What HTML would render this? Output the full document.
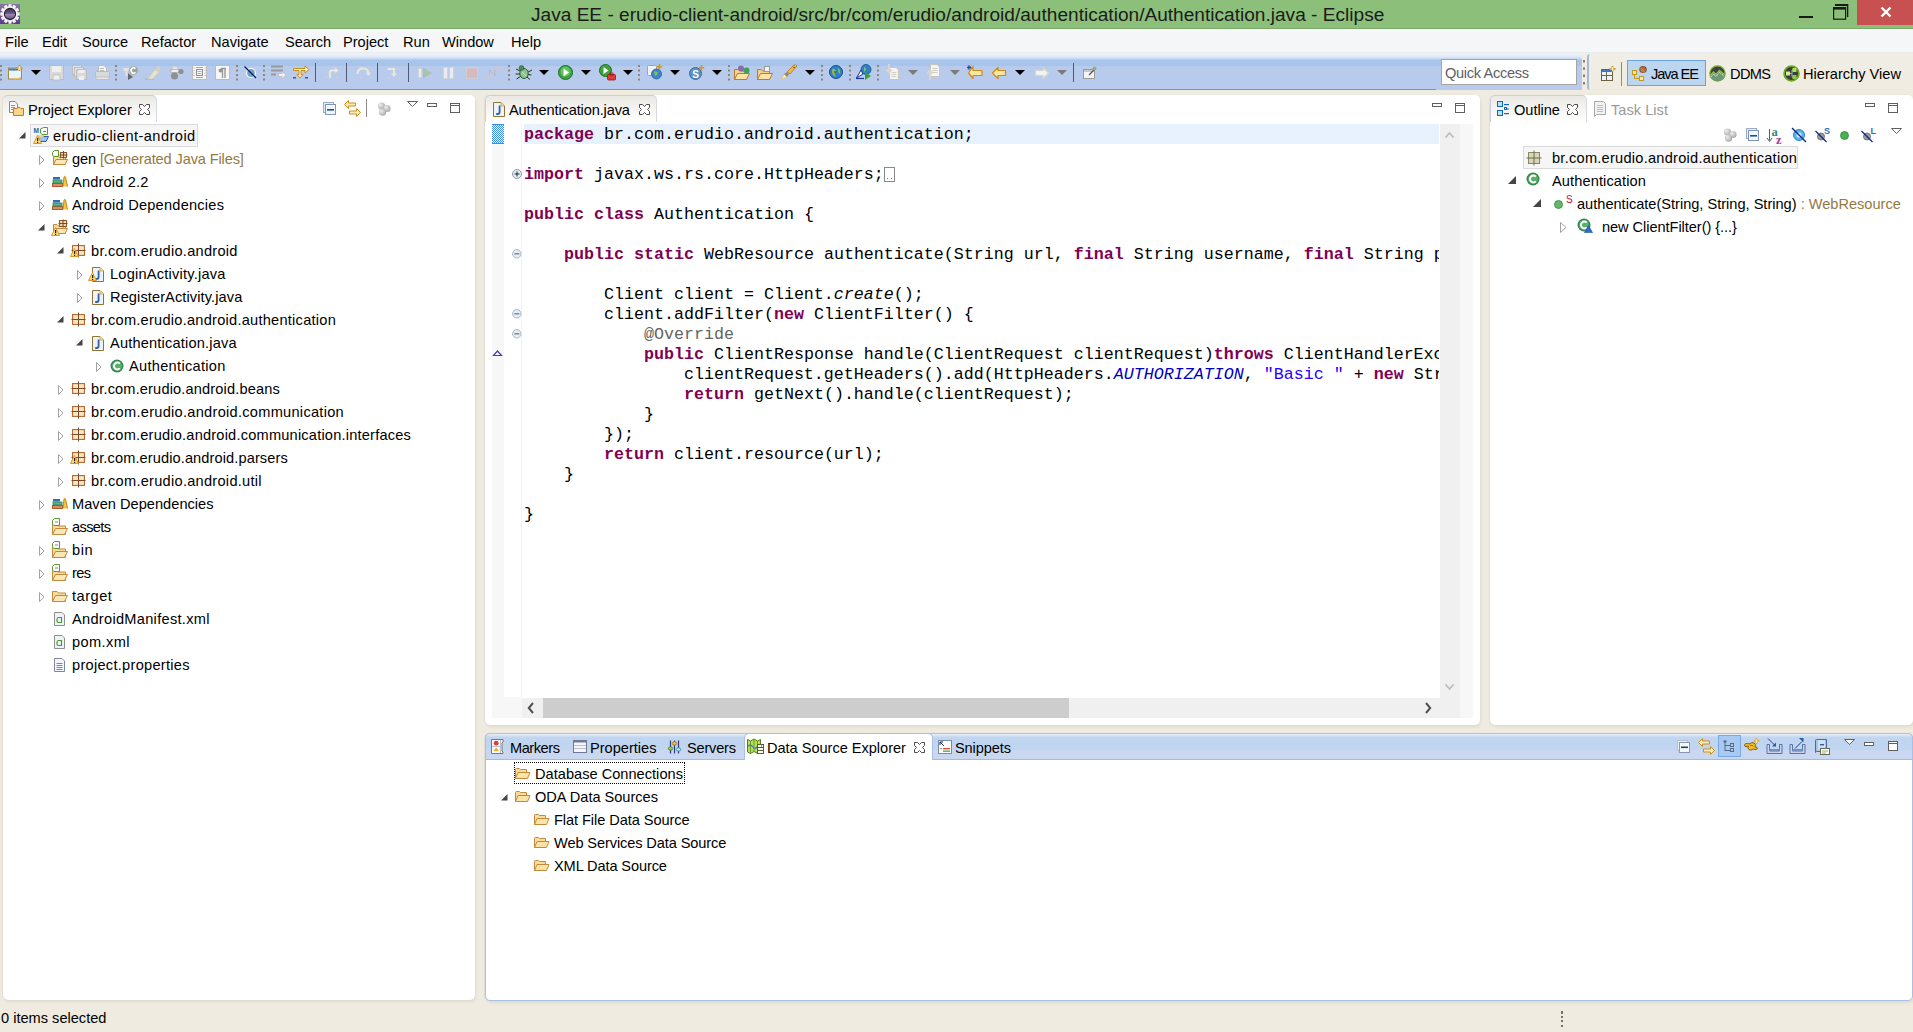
<!DOCTYPE html>
<html><head><meta charset="utf-8"><title>Eclipse</title>
<style>
html,body{margin:0;padding:0;}
body{width:1913px;height:1032px;position:relative;overflow:hidden;background:#efebe0;font-family:'Liberation Sans', sans-serif;}
.t{position:absolute;white-space:pre;line-height:20px;}
svg{overflow:visible;}
.code{position:absolute;left:0;white-space:pre;font-family:"Liberation Mono",monospace;font-size:16.667px;line-height:20px;color:#000;}
.code b{font-weight:bold;}
</style></head><body>
<div style="position:absolute;left:0px;top:0px;width:1913px;height:28px;background:#8bbf7a;"></div><div style="position:absolute;left:0px;top:28px;width:1913px;height:1px;background:#7aa96b;"></div><svg style="position:absolute;left:0px;top:4px;" width="20" height="20" viewBox="0 0 20 20"><defs><linearGradient id="lgp" x1="0" y1="0" x2="0" y2="1"><stop offset="0" stop-color="#8a76a6"/><stop offset="1" stop-color="#5f3891"/></linearGradient><linearGradient id="lgc" x1="0" y1="0" x2="0" y2="1"><stop offset="0" stop-color="#3a3050"/><stop offset="0.45" stop-color="#6a5a88"/><stop offset="0.55" stop-color="#9a8ab0"/><stop offset="1" stop-color="#5a4580"/></linearGradient></defs><rect x="0" y="0" width="20" height="20" fill="url(#lgp)"/><path d="M8.52 0.21 L11.48 0.21 L11.66 2.58 L12.27 2.75 L13.61 0.78 L16.18 2.26 L15.14 4.41 L15.59 4.86 L17.74 3.82 L19.22 6.39 L17.25 7.73 L17.42 8.34 L19.79 8.52 L19.79 11.48 L17.42 11.66 L17.25 12.27 L19.22 13.61 L17.74 16.18 L15.59 15.14 L15.14 15.59 L16.18 17.74 L13.61 19.22 L12.27 17.25 L11.66 17.42 L11.48 19.79 L8.52 19.79 L8.34 17.42 L7.73 17.25 L6.39 19.22 L3.82 17.74 L4.86 15.59 L4.41 15.14 L2.26 16.18 L0.78 13.61 L2.75 12.27 L2.58 11.66 L0.21 11.48 L0.21 8.52 L2.58 8.34 L2.75 7.73 L0.78 6.39 L2.26 3.82 L4.41 4.86 L4.86 4.41 L3.82 2.26 L6.39 0.78 L7.73 2.75 L8.34 2.58 Z" fill="#f2f2f2"/><circle cx="10" cy="10" r="5.6" fill="url(#lgc)" stroke="#241c30" stroke-width="1.1"/></svg><div class="t" style="left:531px;top:5.38px;font-size:19.1px;color:#1b1b1b;font-family:'Liberation Sans', sans-serif;">Java EE - erudio-client-android/src/br/com/erudio/android/authentication/Authentication.java - Eclipse</div><div style="position:absolute;left:1799px;top:16px;width:14px;height:2px;background:#1a1a1a;"></div><svg style="position:absolute;left:1833px;top:4px;" width="16" height="16" viewBox="0 0 16 16"><rect x="2" y="0" width="13" height="2" fill="#1a1a1a"/><rect x="14" y="0" width="1.3" height="13" fill="#1a1a1a"/><rect x="0.6" y="3.6" width="12" height="11.6" fill="none" stroke="#1a1a1a" stroke-width="1.2"/><rect x="0" y="3" width="13" height="2.6" fill="#1a1a1a"/></svg><div style="position:absolute;left:1857px;top:0px;width:56px;height:25px;background:#c75050;"></div><svg style="position:absolute;left:1880px;top:7px;" width="12" height="10" viewBox="0 0 12 10"><path d="M1.5 0.5 L10.5 9.5 M10.5 0.5 L1.5 9.5" stroke="#fff" stroke-width="2.4"/></svg><div style="position:absolute;left:0px;top:29px;width:1913px;height:24px;background:#f5f6f7;"></div><div style="position:absolute;left:0px;top:52px;width:1913px;height:1px;background:#e9ecee;"></div><div class="t" style="left:5px;top:31.94px;font-size:14.6px;color:#000;font-family:'Liberation Sans', sans-serif;">File</div><div class="t" style="left:42px;top:31.94px;font-size:14.6px;color:#000;font-family:'Liberation Sans', sans-serif;">Edit</div><div class="t" style="left:82px;top:31.94px;font-size:14.6px;color:#000;font-family:'Liberation Sans', sans-serif;">Source</div><div class="t" style="left:141px;top:31.94px;font-size:14.6px;color:#000;font-family:'Liberation Sans', sans-serif;">Refactor</div><div class="t" style="left:211px;top:31.94px;font-size:14.6px;color:#000;font-family:'Liberation Sans', sans-serif;">Navigate</div><div class="t" style="left:285px;top:31.94px;font-size:14.6px;color:#000;font-family:'Liberation Sans', sans-serif;">Search</div><div class="t" style="left:343px;top:31.94px;font-size:14.6px;color:#000;font-family:'Liberation Sans', sans-serif;">Project</div><div class="t" style="left:403px;top:31.94px;font-size:14.6px;color:#000;font-family:'Liberation Sans', sans-serif;">Run</div><div class="t" style="left:442px;top:31.94px;font-size:14.6px;color:#000;font-family:'Liberation Sans', sans-serif;">Window</div><div class="t" style="left:511px;top:31.94px;font-size:14.6px;color:#000;font-family:'Liberation Sans', sans-serif;">Help</div><div style="position:absolute;left:0px;top:53px;width:1582px;height:37px;background:linear-gradient(#eef1f8 0px,#e9eff9 2px,#dfe8f7 4px,#b8d0ef 6.5px,#a7c5eb 7.5px,#a7c5eb 12.5px,#b9cbec 13px,#b9cbec 37px);"></div><div style="position:absolute;left:0px;top:89px;width:1436px;height:1px;background:#7f91bd;"></div><div style="position:absolute;left:1582px;top:53px;width:331px;height:41px;background:linear-gradient(#f1eee6,#efebe0);"></div><div style="position:absolute;left:1441px;top:59px;width:136px;height:26px;background:#fff;border:1px solid #a5a5a5;box-sizing:border-box;"></div><div class="t" style="left:1445px;top:62.94px;font-size:14.6px;color:#5f6066;font-family:'Liberation Sans', sans-serif;letter-spacing:-0.330px;">Quick Access</div><div style="position:absolute;left:1587px;top:54px;width:3px;height:36px;border-left:2px solid #a8b8d8;border-radius:3px 0 0 3px;box-sizing:border-box;"></div><div style="position:absolute;left:1621px;top:62px;width:1px;height:24px;background:#8a8a8a;"></div><div style="position:absolute;left:1627px;top:60px;width:79px;height:26px;background:#bcd6f0;border:1px solid #6ba3de;box-sizing:border-box;"></div><div class="t" style="left:1651px;top:64.44px;font-size:14.6px;color:#000;font-family:'Liberation Sans', sans-serif;letter-spacing:-1.062px;">Java EE</div><div class="t" style="left:1730px;top:63.94px;font-size:14.6px;color:#000;font-family:'Liberation Sans', sans-serif;letter-spacing:-0.662px;">DDMS</div><div class="t" style="left:1803px;top:63.94px;font-size:14.6px;color:#000;font-family:'Liberation Sans', sans-serif;letter-spacing:0.007px;">Hierarchy View</div><div style="position:absolute;left:3px;top:95px;width:472px;height:905px;background:#fff;border-radius:5px;box-shadow:1px 2px 3px rgba(100,90,60,0.10),-1px 0 1px rgba(100,90,60,0.07);"></div><div style="position:absolute;left:485px;top:95px;width:995px;height:630px;background:#fff;border-radius:5px;box-shadow:1px 2px 3px rgba(100,90,60,0.10),-1px 0 1px rgba(100,90,60,0.07);"></div><div style="position:absolute;left:1490px;top:95px;width:423px;height:630px;background:#fff;border-radius:5px;box-shadow:1px 2px 3px rgba(100,90,60,0.10),-1px 0 1px rgba(100,90,60,0.07);"></div><div style="position:absolute;left:485px;top:733px;width:1428px;height:268px;background:#fff;border:1px solid #a9bfe6;border-radius:5px;box-sizing:border-box;box-shadow:1px 2px 3px rgba(100,90,60,0.10),-1px 0 1px rgba(100,90,60,0.07);"></div><div style="position:absolute;left:3px;top:95px;width:154px;height:27px;background:linear-gradient(#ebe9e3,#ffffff);border-top:1px solid #c9cfdb;border-right:1px solid #d5d9e3;border-radius:5px 5px 0 0;box-sizing:border-box;"></div><svg style="position:absolute;left:9px;top:101px;" width="16" height="16" viewBox="0 0 16 16"><path d="M0.5 0.5 H6 L8.5 3 V11.5 H0.5 Z" fill="#f4f5f8" stroke="#9c8a5c"/><path d="M2 4.5 H6 M2 6.5 H6 M2 8.5 H5" stroke="#7c98c4"/><path d="M4.5 7.5 H8 L9 6.5 H11 L12 7.5 H14.5 V14.5 H4.5 Z" fill="#f8d888" stroke="#c27a2e"/></svg><div class="t" style="left:28px;top:99.94px;font-size:14.6px;color:#000;font-family:'Liberation Sans', sans-serif;">Project Explorer</div><svg style="position:absolute;left:139px;top:104px;" width="11" height="11" viewBox="0 0 11 11"><path d="M0.5 0.5 H3.5 L5.5 2.5 L7.5 0.5 H10.5 V3.5 L8.5 5.5 L10.5 7.5 V10.5 H7.5 L5.5 8.5 L3.5 10.5 H0.5 V7.5 L2.5 5.5 L0.5 3.5 Z" fill="#fff" stroke="#4a4a4a" stroke-width="1" stroke-linejoin="miter"/></svg><svg style="position:absolute;left:323px;top:102px;" width="14" height="14" viewBox="0 0 14 14"><rect x="0.5" y="0.5" width="10" height="10" fill="#e4eefa" stroke="#9aaccc"/><rect x="2.5" y="2.5" width="10" height="10" fill="#f0f6fd" stroke="#7f95bd"/><rect x="4" y="7" width="7" height="1.6" fill="#1d4e96"/></svg><svg style="position:absolute;left:344px;top:100px;" width="17" height="17" viewBox="0 0 17 17"><path d="M0.5 4.5 L4.5 0.5 V3 H11.5 V6 H4.5 V8.5 Z" fill="#fcebb8" stroke="#c8901e" stroke-linejoin="miter"/><path d="M16.5 12.5 L12.5 8.5 V11 H5.5 V14 H12.5 V16.5 Z" fill="#fcebb8" stroke="#c8901e" stroke-linejoin="miter"/></svg><div style="position:absolute;left:366px;top:99px;width:1px;height:18px;background:#8a8a8a;"></div><svg style="position:absolute;left:377px;top:102px;" width="14" height="14" viewBox="0 0 14 14"><defs><radialGradient id="bg1" cx="0.35" cy="0.35" r="0.7"><stop offset="0" stop-color="#eeeeee"/><stop offset="1" stop-color="#a8a8a8"/></radialGradient></defs><circle cx="4.5" cy="4" r="3.6" fill="url(#bg1)"/><circle cx="10" cy="6.5" r="3.6" fill="url(#bg1)"/><circle cx="5.5" cy="10.2" r="3.6" fill="url(#bg1)"/></svg><svg style="position:absolute;left:407px;top:101px;" width="11" height="7" viewBox="0 0 11 7"><path d="M0.5 0.5 H10.5 L5.5 5.5 Z" fill="#fff" stroke="#606060" stroke-linejoin="miter"/></svg><svg style="position:absolute;left:427px;top:103px;" width="11" height="5" viewBox="0 0 11 5"><rect x="0.5" y="0.5" width="9" height="3" fill="#fff" stroke="#606060"/></svg><svg style="position:absolute;left:450px;top:103px;" width="11" height="11" viewBox="0 0 11 11"><rect x="0.5" y="0.5" width="9" height="9" fill="#fff" stroke="#606060"/><rect x="1" y="2" width="8" height="1" fill="#606060"/></svg><div style="position:absolute;left:30px;top:124px;width:168px;height:23px;background:#f6f6f6;border:1px solid #dadada;box-sizing:border-box;"></div><svg style="position:absolute;left:19px;top:132px;" width="7" height="7" viewBox="0 0 7 7"><path d="M0 6.5 L6.5 6.5 L6.5 0 Z" fill="#454545"/></svg><svg style="position:absolute;left:33px;top:127px;" width="17" height="17" viewBox="0 0 17 17"><text x="0.5" y="6" font-family="Liberation Sans" font-weight="bold" font-size="6.5" fill="#1f5fa0">M</text><path d="M10.5 0.5 H14.5 V7.5 H9 L7.5 6 V2 Z" fill="#fff" stroke="#5a9a2e"/><rect x="10" y="4" width="3" height="1" fill="#a06890"/><path d="M4 8.5 H10 L11 9.5 H15.5 L13 14.5 H6 Z" fill="#9cc4f3" stroke="#3a55b8"/><rect x="4" y="8" width="6" height="2" fill="#f2d489"/></svg><svg style="position:absolute;left:33px;top:135px;" width="9" height="9" viewBox="0 0 9 9"><path d="M4.5 0.5 L8.5 8.5 L0.5 8.5 Z" fill="#fbd973" stroke="#d89b2c" stroke-width="1" stroke-linejoin="round"/><rect x="4" y="3" width="1.2" height="3" fill="#222"/><rect x="4" y="6.8" width="1.2" height="1.2" fill="#222"/></svg><div class="t" style="left:53px;top:125.94px;font-size:14.6px;color:#000;font-family:'Liberation Sans', sans-serif;letter-spacing:0.460px;">erudio-client-android</div><svg style="position:absolute;left:39px;top:155px;" width="7" height="10" viewBox="0 0 7 10"><path d="M0.5 0.5 L5 5 L0.5 9.5 Z" fill="none" stroke="#a3a3a3" stroke-width="1"/></svg><svg style="position:absolute;left:52px;top:150px;" width="16" height="16" viewBox="0 0 16 16"><path d="M1.5 5.5 H5 L6.5 7 H13.5 V14.5 H1.5 Z" fill="#f7dc9c" stroke="#c28a3e"/><path d="M1.5 14.5 L4 9.5 H15.5 L13 14.5 Z" fill="#fbe7b5" stroke="#c28a3e"/><rect x="8.5" y="2.5" width="6" height="5" fill="#f0d5a8" stroke="#8a5a30"/><path d="M11.5 1 V8.5 M7.5 5 H15.5" stroke="#7b4a2c"/><path d="M6.5 0.5 H2.5 L0.5 2.5 V5 L1.8 6.5 H6.5 Z" fill="#fff" stroke="#5a9a2e"/></svg><div class="t" style="left:72px;top:148.94px;font-size:14.6px;color:#000;font-family:'Liberation Sans', sans-serif;letter-spacing:-0.132px;">gen<span style="color:#95793f"> [Generated Java Files]</span></div><svg style="position:absolute;left:39px;top:178px;" width="7" height="10" viewBox="0 0 7 10"><path d="M0.5 0.5 L5 5 L0.5 9.5 Z" fill="none" stroke="#a3a3a3" stroke-width="1"/></svg><svg style="position:absolute;left:52px;top:175px;" width="16" height="14" viewBox="0 0 16 14"><rect x="0.5" y="8.5" width="10" height="3" fill="#d98a5e" stroke="#b05a30"/><rect x="1" y="5" width="9" height="3" fill="#5ab489" stroke="#2d8050" stroke-width="0.8"/><rect x="1" y="2" width="7" height="2.5" fill="#2d6eb5"/><path d="M11 11.5 L12 2 Q12.5 0.5 13.5 2 L15.5 11.5" fill="#f4c542" stroke="#c08920" stroke-width="1"/></svg><div class="t" style="left:72px;top:171.94px;font-size:14.6px;color:#000;font-family:'Liberation Sans', sans-serif;letter-spacing:0.172px;">Android 2.2</div><svg style="position:absolute;left:39px;top:201px;" width="7" height="10" viewBox="0 0 7 10"><path d="M0.5 0.5 L5 5 L0.5 9.5 Z" fill="none" stroke="#a3a3a3" stroke-width="1"/></svg><svg style="position:absolute;left:52px;top:198px;" width="16" height="14" viewBox="0 0 16 14"><rect x="0.5" y="8.5" width="10" height="3" fill="#d98a5e" stroke="#b05a30"/><rect x="1" y="5" width="9" height="3" fill="#5ab489" stroke="#2d8050" stroke-width="0.8"/><rect x="1" y="2" width="7" height="2.5" fill="#2d6eb5"/><path d="M11 11.5 L12 2 Q12.5 0.5 13.5 2 L15.5 11.5" fill="#f4c542" stroke="#c08920" stroke-width="1"/></svg><div class="t" style="left:72px;top:194.94px;font-size:14.6px;color:#000;font-family:'Liberation Sans', sans-serif;letter-spacing:0.225px;">Android Dependencies</div><svg style="position:absolute;left:38px;top:224px;" width="7" height="7" viewBox="0 0 7 7"><path d="M0 6.5 L6.5 6.5 L6.5 0 Z" fill="#454545"/></svg><svg style="position:absolute;left:52px;top:219px;" width="16" height="16" viewBox="0 0 16 16"><path d="M1.5 5.5 H5 L6.5 7 H13.5 V14.5 H1.5 Z" fill="#f7dc9c" stroke="#c28a3e"/><path d="M1.5 14.5 L4 9.5 H15.5 L13 14.5 Z" fill="#fbe7b5" stroke="#c28a3e"/><rect x="7.5" y="1.5" width="7" height="6" fill="#f0d5a8" stroke="#8a5a30"/><path d="M11 0.5 V8.5 M6.5 4.5 H15.5" stroke="#7b4a2c"/></svg><svg style="position:absolute;left:51px;top:227px;" width="9" height="9" viewBox="0 0 9 9"><path d="M4.5 0.5 L8.5 8.5 L0.5 8.5 Z" fill="#fbd973" stroke="#d89b2c" stroke-width="1" stroke-linejoin="round"/><rect x="4" y="3" width="1.2" height="3" fill="#222"/><rect x="4" y="6.8" width="1.2" height="1.2" fill="#222"/></svg><div class="t" style="left:72px;top:217.94px;font-size:14.6px;color:#000;font-family:'Liberation Sans', sans-serif;letter-spacing:-0.731px;">src</div><svg style="position:absolute;left:57px;top:247px;" width="7" height="7" viewBox="0 0 7 7"><path d="M0 6.5 L6.5 6.5 L6.5 0 Z" fill="#454545"/></svg><svg style="position:absolute;left:71px;top:242px;" width="16" height="16" viewBox="0 0 16 16"><rect x="1.5" y="3.5" width="12" height="10" fill="#e9c99a" stroke="#b86c34"/><rect x="2.5" y="4.5" width="4.5" height="3.5" fill="#f8e6c0"/><rect x="8" y="4.5" width="4.5" height="3.5" fill="#f8e6c0"/><rect x="2.5" y="9" width="4.5" height="3.5" fill="#f8e6c0"/><rect x="8" y="9" width="4.5" height="3.5" fill="#f8e6c0"/><path d="M7.5 1.5 V15.5 M0.5 8.5 H14.5" stroke="#7b4a2c" stroke-width="1"/></svg><svg style="position:absolute;left:70px;top:248px;" width="9" height="9" viewBox="0 0 9 9"><path d="M4.5 0.5 L8.5 8.5 L0.5 8.5 Z" fill="#fbd973" stroke="#d89b2c" stroke-width="1" stroke-linejoin="round"/><rect x="4" y="3" width="1.2" height="3" fill="#222"/><rect x="4" y="6.8" width="1.2" height="1.2" fill="#222"/></svg><div class="t" style="left:91px;top:240.94px;font-size:14.6px;color:#000;font-family:'Liberation Sans', sans-serif;letter-spacing:0.264px;">br.com.erudio.android</div><svg style="position:absolute;left:77px;top:270px;" width="7" height="10" viewBox="0 0 7 10"><path d="M0.5 0.5 L5 5 L0.5 9.5 Z" fill="none" stroke="#a3a3a3" stroke-width="1"/></svg><svg style="position:absolute;left:90px;top:266px;" width="16" height="16" viewBox="0 0 16 16"><path d="M2.5 1.5 H10 L13.5 5 V15.5 H2.5 Z" fill="#eef3fb" stroke="#8f7433"/><path d="M10 1.5 V5 H13.5" fill="#f4dfa0" stroke="#c9a24a" stroke-width="0.8"/><path d="M8.6 4.5 V11 Q8.6 13 6.6 13 H5.2" fill="none" stroke="#2f63a5" stroke-width="1.8"/></svg><svg style="position:absolute;left:88px;top:272px;" width="9" height="9" viewBox="0 0 9 9"><path d="M4.5 0.5 L8.5 8.5 L0.5 8.5 Z" fill="#fbd973" stroke="#d89b2c" stroke-width="1" stroke-linejoin="round"/><rect x="4" y="3" width="1.2" height="3" fill="#222"/><rect x="4" y="6.8" width="1.2" height="1.2" fill="#222"/></svg><div class="t" style="left:110px;top:263.94px;font-size:14.6px;color:#000;font-family:'Liberation Sans', sans-serif;letter-spacing:0.217px;">LoginActivity.java</div><svg style="position:absolute;left:77px;top:293px;" width="7" height="10" viewBox="0 0 7 10"><path d="M0.5 0.5 L5 5 L0.5 9.5 Z" fill="none" stroke="#a3a3a3" stroke-width="1"/></svg><svg style="position:absolute;left:90px;top:289px;" width="16" height="16" viewBox="0 0 16 16"><path d="M2.5 1.5 H10 L13.5 5 V15.5 H2.5 Z" fill="#eef3fb" stroke="#8f7433"/><path d="M10 1.5 V5 H13.5" fill="#f4dfa0" stroke="#c9a24a" stroke-width="0.8"/><path d="M8.6 4.5 V11 Q8.6 13 6.6 13 H5.2" fill="none" stroke="#2f63a5" stroke-width="1.8"/></svg><div class="t" style="left:110px;top:286.94px;font-size:14.6px;color:#000;font-family:'Liberation Sans', sans-serif;letter-spacing:0.097px;">RegisterActivity.java</div><svg style="position:absolute;left:57px;top:316px;" width="7" height="7" viewBox="0 0 7 7"><path d="M0 6.5 L6.5 6.5 L6.5 0 Z" fill="#454545"/></svg><svg style="position:absolute;left:71px;top:311px;" width="16" height="16" viewBox="0 0 16 16"><rect x="1.5" y="3.5" width="12" height="10" fill="#e9c99a" stroke="#b86c34"/><rect x="2.5" y="4.5" width="4.5" height="3.5" fill="#f8e6c0"/><rect x="8" y="4.5" width="4.5" height="3.5" fill="#f8e6c0"/><rect x="2.5" y="9" width="4.5" height="3.5" fill="#f8e6c0"/><rect x="8" y="9" width="4.5" height="3.5" fill="#f8e6c0"/><path d="M7.5 1.5 V15.5 M0.5 8.5 H14.5" stroke="#7b4a2c" stroke-width="1"/></svg><div class="t" style="left:91px;top:309.94px;font-size:14.6px;color:#000;font-family:'Liberation Sans', sans-serif;letter-spacing:0.249px;">br.com.erudio.android.authentication</div><svg style="position:absolute;left:76px;top:339px;" width="7" height="7" viewBox="0 0 7 7"><path d="M0 6.5 L6.5 6.5 L6.5 0 Z" fill="#454545"/></svg><svg style="position:absolute;left:90px;top:335px;" width="16" height="16" viewBox="0 0 16 16"><path d="M2.5 1.5 H10 L13.5 5 V15.5 H2.5 Z" fill="#eef3fb" stroke="#8f7433"/><path d="M10 1.5 V5 H13.5" fill="#f4dfa0" stroke="#c9a24a" stroke-width="0.8"/><path d="M8.6 4.5 V11 Q8.6 13 6.6 13 H5.2" fill="none" stroke="#2f63a5" stroke-width="1.8"/></svg><div class="t" style="left:110px;top:332.94px;font-size:14.6px;color:#000;font-family:'Liberation Sans', sans-serif;letter-spacing:0.185px;">Authentication.java</div><svg style="position:absolute;left:96px;top:362px;" width="7" height="10" viewBox="0 0 7 10"><path d="M0.5 0.5 L5 5 L0.5 9.5 Z" fill="none" stroke="#a3a3a3" stroke-width="1"/></svg><svg style="position:absolute;left:110px;top:359px;" width="16" height="16" viewBox="0 0 16 16"><circle cx="7" cy="7" r="6.5" fill="#2f8a4c"/><circle cx="7" cy="7" r="5.0" fill="#5cae6c"/><path d="M9.8 4.6 A3.4 3.4 0 1 0 9.8 9.4" fill="none" stroke="#fff" stroke-width="2"/></svg><div class="t" style="left:129px;top:355.94px;font-size:14.6px;color:#000;font-family:'Liberation Sans', sans-serif;letter-spacing:0.297px;">Authentication</div><svg style="position:absolute;left:58px;top:385px;" width="7" height="10" viewBox="0 0 7 10"><path d="M0.5 0.5 L5 5 L0.5 9.5 Z" fill="none" stroke="#a3a3a3" stroke-width="1"/></svg><svg style="position:absolute;left:71px;top:380px;" width="16" height="16" viewBox="0 0 16 16"><rect x="1.5" y="3.5" width="12" height="10" fill="#e9c99a" stroke="#b86c34"/><rect x="2.5" y="4.5" width="4.5" height="3.5" fill="#f8e6c0"/><rect x="8" y="4.5" width="4.5" height="3.5" fill="#f8e6c0"/><rect x="2.5" y="9" width="4.5" height="3.5" fill="#f8e6c0"/><rect x="8" y="9" width="4.5" height="3.5" fill="#f8e6c0"/><path d="M7.5 1.5 V15.5 M0.5 8.5 H14.5" stroke="#7b4a2c" stroke-width="1"/></svg><div class="t" style="left:91px;top:378.94px;font-size:14.6px;color:#000;font-family:'Liberation Sans', sans-serif;letter-spacing:0.144px;">br.com.erudio.android.beans</div><svg style="position:absolute;left:58px;top:408px;" width="7" height="10" viewBox="0 0 7 10"><path d="M0.5 0.5 L5 5 L0.5 9.5 Z" fill="none" stroke="#a3a3a3" stroke-width="1"/></svg><svg style="position:absolute;left:71px;top:403px;" width="16" height="16" viewBox="0 0 16 16"><rect x="1.5" y="3.5" width="12" height="10" fill="#e9c99a" stroke="#b86c34"/><rect x="2.5" y="4.5" width="4.5" height="3.5" fill="#f8e6c0"/><rect x="8" y="4.5" width="4.5" height="3.5" fill="#f8e6c0"/><rect x="2.5" y="9" width="4.5" height="3.5" fill="#f8e6c0"/><rect x="8" y="9" width="4.5" height="3.5" fill="#f8e6c0"/><path d="M7.5 1.5 V15.5 M0.5 8.5 H14.5" stroke="#7b4a2c" stroke-width="1"/></svg><div class="t" style="left:91px;top:401.94px;font-size:14.6px;color:#000;font-family:'Liberation Sans', sans-serif;letter-spacing:0.275px;">br.com.erudio.android.communication</div><svg style="position:absolute;left:58px;top:431px;" width="7" height="10" viewBox="0 0 7 10"><path d="M0.5 0.5 L5 5 L0.5 9.5 Z" fill="none" stroke="#a3a3a3" stroke-width="1"/></svg><svg style="position:absolute;left:71px;top:426px;" width="16" height="16" viewBox="0 0 16 16"><rect x="1.5" y="3.5" width="12" height="10" fill="#e9c99a" stroke="#b86c34"/><rect x="2.5" y="4.5" width="4.5" height="3.5" fill="#f8e6c0"/><rect x="8" y="4.5" width="4.5" height="3.5" fill="#f8e6c0"/><rect x="2.5" y="9" width="4.5" height="3.5" fill="#f8e6c0"/><rect x="8" y="9" width="4.5" height="3.5" fill="#f8e6c0"/><path d="M7.5 1.5 V15.5 M0.5 8.5 H14.5" stroke="#7b4a2c" stroke-width="1"/></svg><div class="t" style="left:91px;top:424.94px;font-size:14.6px;color:#000;font-family:'Liberation Sans', sans-serif;letter-spacing:0.204px;">br.com.erudio.android.communication.interfaces</div><svg style="position:absolute;left:58px;top:454px;" width="7" height="10" viewBox="0 0 7 10"><path d="M0.5 0.5 L5 5 L0.5 9.5 Z" fill="none" stroke="#a3a3a3" stroke-width="1"/></svg><svg style="position:absolute;left:71px;top:449px;" width="16" height="16" viewBox="0 0 16 16"><rect x="1.5" y="3.5" width="12" height="10" fill="#e9c99a" stroke="#b86c34"/><rect x="2.5" y="4.5" width="4.5" height="3.5" fill="#f8e6c0"/><rect x="8" y="4.5" width="4.5" height="3.5" fill="#f8e6c0"/><rect x="2.5" y="9" width="4.5" height="3.5" fill="#f8e6c0"/><rect x="8" y="9" width="4.5" height="3.5" fill="#f8e6c0"/><path d="M7.5 1.5 V15.5 M0.5 8.5 H14.5" stroke="#7b4a2c" stroke-width="1"/></svg><svg style="position:absolute;left:70px;top:455px;" width="9" height="9" viewBox="0 0 9 9"><path d="M4.5 0.5 L8.5 8.5 L0.5 8.5 Z" fill="#fbd973" stroke="#d89b2c" stroke-width="1" stroke-linejoin="round"/><rect x="4" y="3" width="1.2" height="3" fill="#222"/><rect x="4" y="6.8" width="1.2" height="1.2" fill="#222"/></svg><div class="t" style="left:91px;top:447.94px;font-size:14.6px;color:#000;font-family:'Liberation Sans', sans-serif;letter-spacing:0.102px;">br.com.erudio.android.parsers</div><svg style="position:absolute;left:58px;top:477px;" width="7" height="10" viewBox="0 0 7 10"><path d="M0.5 0.5 L5 5 L0.5 9.5 Z" fill="none" stroke="#a3a3a3" stroke-width="1"/></svg><svg style="position:absolute;left:71px;top:472px;" width="16" height="16" viewBox="0 0 16 16"><rect x="1.5" y="3.5" width="12" height="10" fill="#e9c99a" stroke="#b86c34"/><rect x="2.5" y="4.5" width="4.5" height="3.5" fill="#f8e6c0"/><rect x="8" y="4.5" width="4.5" height="3.5" fill="#f8e6c0"/><rect x="2.5" y="9" width="4.5" height="3.5" fill="#f8e6c0"/><rect x="8" y="9" width="4.5" height="3.5" fill="#f8e6c0"/><path d="M7.5 1.5 V15.5 M0.5 8.5 H14.5" stroke="#7b4a2c" stroke-width="1"/></svg><div class="t" style="left:91px;top:470.94px;font-size:14.6px;color:#000;font-family:'Liberation Sans', sans-serif;letter-spacing:0.267px;">br.com.erudio.android.util</div><svg style="position:absolute;left:39px;top:500px;" width="7" height="10" viewBox="0 0 7 10"><path d="M0.5 0.5 L5 5 L0.5 9.5 Z" fill="none" stroke="#a3a3a3" stroke-width="1"/></svg><svg style="position:absolute;left:52px;top:497px;" width="16" height="14" viewBox="0 0 16 14"><rect x="0.5" y="8.5" width="10" height="3" fill="#d98a5e" stroke="#b05a30"/><rect x="1" y="5" width="9" height="3" fill="#5ab489" stroke="#2d8050" stroke-width="0.8"/><rect x="1" y="2" width="7" height="2.5" fill="#2d6eb5"/><path d="M11 11.5 L12 2 Q12.5 0.5 13.5 2 L15.5 11.5" fill="#f4c542" stroke="#c08920" stroke-width="1"/></svg><div class="t" style="left:72px;top:493.94px;font-size:14.6px;color:#000;font-family:'Liberation Sans', sans-serif;letter-spacing:0.022px;">Maven Dependencies</div><svg style="position:absolute;left:52px;top:521px;" width="16" height="16" viewBox="0 0 16 16"><path d="M0.5 3.5 H5 L6.5 5 H13.5 V13.5 H0.5 Z" fill="#f7dc9c" stroke="#c28a3e"/><path d="M0.5 13.5 L3.5 7.5 H15.5 L12.5 13.5 Z" fill="#fbe7b5" stroke="#c28a3e"/></svg><svg style="position:absolute;left:52px;top:518px;" width="9" height="8" viewBox="0 0 9 8"><path d="M7.5 0.5 H2.5 L0.5 2.5 V6 L1.8 7.5 H7.5 Z" fill="#fff" stroke="#5a9a2e"/><rect x="3" y="3.5" width="3" height="1" fill="#b07090"/></svg><div class="t" style="left:72px;top:516.94px;font-size:14.6px;color:#000;font-family:'Liberation Sans', sans-serif;letter-spacing:-0.639px;">assets</div><svg style="position:absolute;left:39px;top:546px;" width="7" height="10" viewBox="0 0 7 10"><path d="M0.5 0.5 L5 5 L0.5 9.5 Z" fill="none" stroke="#a3a3a3" stroke-width="1"/></svg><svg style="position:absolute;left:52px;top:544px;" width="16" height="16" viewBox="0 0 16 16"><path d="M0.5 3.5 H5 L6.5 5 H13.5 V13.5 H0.5 Z" fill="#f7dc9c" stroke="#c28a3e"/><path d="M0.5 13.5 L3.5 7.5 H15.5 L12.5 13.5 Z" fill="#fbe7b5" stroke="#c28a3e"/></svg><svg style="position:absolute;left:52px;top:541px;" width="9" height="8" viewBox="0 0 9 8"><path d="M7.5 0.5 H2.5 L0.5 2.5 V6 L1.8 7.5 H7.5 Z" fill="#fff" stroke="#5a9a2e"/><rect x="3" y="3.5" width="3" height="1" fill="#b07090"/></svg><div class="t" style="left:72px;top:539.94px;font-size:14.6px;color:#000;font-family:'Liberation Sans', sans-serif;letter-spacing:0.608px;">bin</div><svg style="position:absolute;left:39px;top:569px;" width="7" height="10" viewBox="0 0 7 10"><path d="M0.5 0.5 L5 5 L0.5 9.5 Z" fill="none" stroke="#a3a3a3" stroke-width="1"/></svg><svg style="position:absolute;left:52px;top:567px;" width="16" height="16" viewBox="0 0 16 16"><path d="M0.5 3.5 H5 L6.5 5 H13.5 V13.5 H0.5 Z" fill="#f7dc9c" stroke="#c28a3e"/><path d="M0.5 13.5 L3.5 7.5 H15.5 L12.5 13.5 Z" fill="#fbe7b5" stroke="#c28a3e"/></svg><svg style="position:absolute;left:52px;top:564px;" width="9" height="8" viewBox="0 0 9 8"><path d="M7.5 0.5 H2.5 L0.5 2.5 V6 L1.8 7.5 H7.5 Z" fill="#fff" stroke="#5a9a2e"/><rect x="3" y="3.5" width="3" height="1" fill="#b07090"/></svg><div class="t" style="left:72px;top:562.94px;font-size:14.6px;color:#000;font-family:'Liberation Sans', sans-serif;letter-spacing:-0.591px;">res</div><svg style="position:absolute;left:39px;top:592px;" width="7" height="10" viewBox="0 0 7 10"><path d="M0.5 0.5 L5 5 L0.5 9.5 Z" fill="none" stroke="#a3a3a3" stroke-width="1"/></svg><svg style="position:absolute;left:52px;top:588px;" width="16" height="16" viewBox="0 0 16 16"><path d="M0.5 3.5 H5 L6.5 5 H13.5 V13.5 H0.5 Z" fill="#f7dc9c" stroke="#c28a3e"/><path d="M0.5 13.5 L3.5 7.5 H15.5 L12.5 13.5 Z" fill="#fbe7b5" stroke="#c28a3e"/></svg><div class="t" style="left:72px;top:585.94px;font-size:14.6px;color:#000;font-family:'Liberation Sans', sans-serif;letter-spacing:0.513px;">target</div><svg style="position:absolute;left:52px;top:611px;" width="16" height="16" viewBox="0 0 16 16"><path d="M2.5 1.5 H10 L12.5 4 V14.5 H2.5 Z" fill="#eef3fb" stroke="#8f8f8f"/><path d="M9.5 6.5 H6.5 Q5 6.5 5 8.5 V10 Q5 11.5 6.5 11.5 H9.5 V6" fill="none" stroke="#4c9a2a" stroke-width="1.2"/></svg><div class="t" style="left:72px;top:608.94px;font-size:14.6px;color:#000;font-family:'Liberation Sans', sans-serif;letter-spacing:0.291px;">AndroidManifest.xml</div><svg style="position:absolute;left:52px;top:634px;" width="16" height="16" viewBox="0 0 16 16"><path d="M2.5 1.5 H10 L12.5 4 V14.5 H2.5 Z" fill="#eef3fb" stroke="#8f8f8f"/><path d="M9.5 6.5 H6.5 Q5 6.5 5 8.5 V10 Q5 11.5 6.5 11.5 H9.5 V6" fill="none" stroke="#4c9a2a" stroke-width="1.2"/></svg><div class="t" style="left:72px;top:631.94px;font-size:14.6px;color:#000;font-family:'Liberation Sans', sans-serif;letter-spacing:0.389px;">pom.xml</div><svg style="position:absolute;left:52px;top:657px;" width="16" height="16" viewBox="0 0 16 16"><path d="M2.5 1.5 H10 L12.5 4 V14.5 H2.5 Z" fill="#f6f8fd" stroke="#7c86a8"/><path d="M4.5 6.5 H10.5 M4.5 8.5 H10.5 M4.5 10.5 H10.5 M4.5 12.5 H10.5" stroke="#6b86c4" stroke-width="1"/></svg><div class="t" style="left:72px;top:654.94px;font-size:14.6px;color:#000;font-family:'Liberation Sans', sans-serif;letter-spacing:0.282px;">project.properties</div><div class="t" style="left:1px;top:1007.94px;font-size:14.6px;color:#000;font-family:'Liberation Sans', sans-serif;">0 items selected</div><div style="position:absolute;left:485px;top:95px;width:172px;height:27px;background:linear-gradient(#ebe9e3,#ffffff);border-top:1px solid #c9cfdb;border-left:1px solid #c9cfdb;border-right:1px solid #d5d9e3;border-radius:5px 5px 0 0;box-sizing:border-box;"></div><svg style="position:absolute;left:491px;top:101px;" width="16" height="16" viewBox="0 0 16 16"><path d="M2.5 1.5 H10 L13.5 5 V15.5 H2.5 Z" fill="#eef3fb" stroke="#8f7433"/><path d="M10 1.5 V5 H13.5" fill="#f4dfa0" stroke="#c9a24a" stroke-width="0.8"/><path d="M8.6 4.5 V11 Q8.6 13 6.6 13 H5.2" fill="none" stroke="#2f63a5" stroke-width="1.8"/></svg><div class="t" style="left:509px;top:99.94px;font-size:14.6px;color:#000;font-family:'Liberation Sans', sans-serif;letter-spacing:-0.132px;">Authentication.java</div><svg style="position:absolute;left:639px;top:104px;" width="11" height="11" viewBox="0 0 11 11"><path d="M0.5 0.5 H3.5 L5.5 2.5 L7.5 0.5 H10.5 V3.5 L8.5 5.5 L10.5 7.5 V10.5 H7.5 L5.5 8.5 L3.5 10.5 H0.5 V7.5 L2.5 5.5 L0.5 3.5 Z" fill="#fff" stroke="#4a4a4a" stroke-width="1" stroke-linejoin="miter"/></svg><svg style="position:absolute;left:1432px;top:103px;" width="11" height="5" viewBox="0 0 11 5"><rect x="0.5" y="0.5" width="9" height="3" fill="#fff" stroke="#606060"/></svg><svg style="position:absolute;left:1455px;top:103px;" width="11" height="11" viewBox="0 0 11 11"><rect x="0.5" y="0.5" width="9" height="9" fill="#fff" stroke="#606060"/><rect x="1" y="2" width="8" height="1" fill="#606060"/></svg><div style="position:absolute;left:492px;top:124px;width:12px;height:594px;background:#f7f7f7;"></div><div style="position:absolute;left:504px;top:697px;width:18px;height:21px;background:#f7f7f7;"></div><div style="position:absolute;left:521px;top:124px;width:1px;height:573px;background:#f3f3f3;"></div><div style="position:absolute;left:524px;top:124px;width:915px;height:20px;background:#e8f2fe;"></div><svg style="position:absolute;left:492px;top:124px;" width="12" height="20" viewBox="0 0 12 20"><defs><pattern id="chk" width="2" height="2" patternUnits="userSpaceOnUse"><rect width="2" height="2" fill="#fff"/><rect width="1" height="1" fill="#3b8cf5"/><rect x="1" y="1" width="1" height="1" fill="#3b8cf5"/></pattern></defs><rect width="12" height="20" fill="url(#chk)"/><rect width="12" height="1" fill="#3b8cf5"/><rect y="19" width="12" height="1" fill="#3b8cf5"/></svg><div style="position:absolute;left:1440px;top:124px;width:20px;height:574px;background:#f0f0f0;"></div><div style="position:absolute;left:1460px;top:124px;width:13px;height:594px;background:#f7f7f7;"></div><svg style="position:absolute;left:1445px;top:131px;" width="10" height="8" viewBox="0 0 10 8"><path d="M0.5 6.5 L4.5 2 L8.5 6.5" fill="none" stroke="#bdbdbd" stroke-width="1.8"/></svg><svg style="position:absolute;left:1445px;top:683px;" width="10" height="8" viewBox="0 0 10 8"><path d="M0.5 1.5 L4.5 6 L8.5 1.5" fill="none" stroke="#bdbdbd" stroke-width="1.8"/></svg><div style="position:absolute;left:522px;top:698px;width:938px;height:20px;background:#f0f0f0;"></div><div style="position:absolute;left:543px;top:698px;width:526px;height:20px;background:#cdcdcd;"></div><svg style="position:absolute;left:527px;top:702px;" width="8" height="12" viewBox="0 0 8 12"><path d="M6 1 L1.8 6 L6 11" fill="none" stroke="#505050" stroke-width="2"/></svg><svg style="position:absolute;left:1424px;top:702px;" width="8" height="12" viewBox="0 0 8 12"><path d="M2 1 L6.2 6 L2 11" fill="none" stroke="#505050" stroke-width="2"/></svg><svg style="position:absolute;left:512px;top:169px;" width="10" height="10" viewBox="0 0 10 10"><circle cx="5" cy="5" r="4.5" fill="#e6ecf3" stroke="#8d9aaa"/><rect x="2.5" y="4.5" width="5" height="1" fill="#1e2a38"/><rect x="4.5" y="2.5" width="1" height="5" fill="#1e2a38"/></svg><svg style="position:absolute;left:512px;top:249px;" width="10" height="10" viewBox="0 0 10 10"><circle cx="4.8" cy="4.8" r="4.2" fill="#e4eef8" stroke="#aab6c4"/><rect x="2.3" y="4.2" width="5" height="1.2" fill="#6a7480"/></svg><svg style="position:absolute;left:512px;top:309px;" width="10" height="10" viewBox="0 0 10 10"><circle cx="4.8" cy="4.8" r="4.2" fill="#e4eef8" stroke="#aab6c4"/><rect x="2.3" y="4.2" width="5" height="1.2" fill="#6a7480"/></svg><svg style="position:absolute;left:512px;top:329px;" width="10" height="10" viewBox="0 0 10 10"><circle cx="4.8" cy="4.8" r="4.2" fill="#e4eef8" stroke="#aab6c4"/><rect x="2.3" y="4.2" width="5" height="1.2" fill="#6a7480"/></svg><svg style="position:absolute;left:492px;top:349px;" width="12" height="8" viewBox="0 0 12 8"><path d="M1.5 6.5 L5.5 2 L9.5 6.5 Z" fill="#fff" stroke="#4a3ab8" stroke-width="1.2"/></svg><div style="position:absolute;left:524px;top:125px;width:915px;height:572px;overflow:hidden;"><div class="code" style="top:0px"><b style="color:#7f0055">package</b> br.com.erudio.android.authentication;</div><div class="code" style="top:20px"></div><div class="code" style="top:40px"><b style="color:#7f0055">import</b> javax.ws.rs.core.HttpHeaders;</div><div class="code" style="top:60px"></div><div class="code" style="top:80px"><b style="color:#7f0055">public</b> <b style="color:#7f0055">class</b> Authentication {</div><div class="code" style="top:100px"></div><div class="code" style="top:120px">    <b style="color:#7f0055">public</b> <b style="color:#7f0055">static</b> WebResource authenticate(String url, <b style="color:#7f0055">final</b> String username, <b style="color:#7f0055">final</b> String password) {</div><div class="code" style="top:140px"></div><div class="code" style="top:160px">        Client client = Client.<i>create</i>();</div><div class="code" style="top:180px">        client.addFilter(<b style="color:#7f0055">new</b> ClientFilter() {</div><div class="code" style="top:200px">            <span style="color:#646464">@Override</span></div><div class="code" style="top:220px">            <b style="color:#7f0055">public</b> ClientResponse handle(ClientRequest clientRequest)<b style="color:#7f0055">throws</b> ClientHandlerException {</div><div class="code" style="top:240px">                clientRequest.getHeaders().add(HttpHeaders.<i style="color:#0000c0">AUTHORIZATION</i>, <span style="color:#2a00ff">"Basic "</span> + <b style="color:#7f0055">new</b> String(Base64.<i>encode</i>(username + <span style="color:#2a00ff">":"</span> + password)));</div><div class="code" style="top:260px">                <b style="color:#7f0055">return</b> getNext().handle(clientRequest);</div><div class="code" style="top:280px">            }</div><div class="code" style="top:300px">        });</div><div class="code" style="top:320px">        <b style="color:#7f0055">return</b> client.resource(url);</div><div class="code" style="top:340px">    }</div><div class="code" style="top:360px"></div><div class="code" style="top:380px">}</div></div><svg style="position:absolute;left:884px;top:167px;" width="11" height="15" viewBox="0 0 11 15"><rect x="0.5" y="0.5" width="10" height="14" fill="none" stroke="#8a8a8a"/><rect x="3" y="11" width="1" height="1" fill="#777"/><rect x="7" y="11" width="1" height="1" fill="#777"/></svg><div style="position:absolute;left:1490px;top:95px;width:97px;height:27px;background:linear-gradient(#ebe9e3,#ffffff);border-top:1px solid #c9cfdb;border-left:1px solid #c9cfdb;border-right:1px solid #d5d9e3;border-radius:5px 5px 0 0;box-sizing:border-box;"></div><svg style="position:absolute;left:1497px;top:101px;" width="15" height="16" viewBox="0 0 15 16"><rect x="0.5" y="0.5" width="5" height="5" fill="#bde0fb" stroke="#1565b8"/><rect x="0.5" y="9.5" width="5" height="5" fill="#bde0fb" stroke="#1565b8"/><rect x="7" y="3" width="5" height="1.2" fill="#1565b8"/><rect x="7.5" y="6.5" width="2" height="2" fill="#fff" stroke="#1565b8" stroke-width="1"/><rect x="10" y="7.5" width="2" height="1" fill="#1565b8"/><rect x="7" y="12" width="5" height="1.2" fill="#1565b8"/></svg><div class="t" style="left:1514px;top:99.94px;font-size:14.6px;color:#000;font-family:'Liberation Sans', sans-serif;letter-spacing:-0.043px;">Outline</div><svg style="position:absolute;left:1567px;top:104px;" width="11" height="11" viewBox="0 0 11 11"><path d="M0.5 0.5 H3.5 L5.5 2.5 L7.5 0.5 H10.5 V3.5 L8.5 5.5 L10.5 7.5 V10.5 H7.5 L5.5 8.5 L3.5 10.5 H0.5 V7.5 L2.5 5.5 L0.5 3.5 Z" fill="#fff" stroke="#4a4a4a" stroke-width="1" stroke-linejoin="miter"/></svg><svg style="position:absolute;left:1594px;top:101px;" width="13" height="16" viewBox="0 0 13 16"><path d="M0.5 0.5 H9.5 L11.5 2.5 V13.5 H2.5 L0.5 15.5 Z" fill="#f2f2f2" stroke="#a9a9a9"/><path d="M3 4.5 H9 M3 6.5 H9 M3 8.5 H9 M3 10.5 H9" stroke="#bdbdbd"/></svg><div class="t" style="left:1611px;top:99.94px;font-size:14.6px;color:#9a9a9a;font-family:'Liberation Sans', sans-serif;letter-spacing:0.025px;">Task List</div><svg style="position:absolute;left:1865px;top:103px;" width="11" height="5" viewBox="0 0 11 5"><rect x="0.5" y="0.5" width="9" height="3" fill="#fff" stroke="#606060"/></svg><svg style="position:absolute;left:1888px;top:103px;" width="11" height="11" viewBox="0 0 11 11"><rect x="0.5" y="0.5" width="9" height="9" fill="#fff" stroke="#606060"/><rect x="1" y="2" width="8" height="1" fill="#606060"/></svg><svg style="position:absolute;left:1723px;top:128px;" width="14" height="14" viewBox="0 0 14 14"><defs><radialGradient id="bg1" cx="0.35" cy="0.35" r="0.7"><stop offset="0" stop-color="#eeeeee"/><stop offset="1" stop-color="#a8a8a8"/></radialGradient></defs><circle cx="4.5" cy="4" r="3.6" fill="url(#bg1)"/><circle cx="10" cy="6.5" r="3.6" fill="url(#bg1)"/><circle cx="5.5" cy="10.2" r="3.6" fill="url(#bg1)"/></svg><svg style="position:absolute;left:1746px;top:128px;" width="14" height="14" viewBox="0 0 14 14"><rect x="0.5" y="0.5" width="10" height="10" fill="#e4eefa" stroke="#9aaccc"/><rect x="2.5" y="2.5" width="10" height="10" fill="#f0f6fd" stroke="#7f95bd"/><rect x="4" y="7" width="7" height="1.6" fill="#1d4e96"/></svg><svg style="position:absolute;left:1767px;top:127px;" width="17" height="16" viewBox="0 0 17 16"><path d="M2.5 2 V13.5" stroke="#47607a"/><path d="M0 11 L2.5 14.5 L5 11" fill="none" stroke="#47607a"/><text x="4.5" y="8.5" font-family="Liberation Serif" font-weight="bold" font-size="12.5" fill="#2c8a79">a</text><text x="9" y="16.5" font-family="Liberation Serif" font-weight="bold" font-size="12.5" fill="#9b3aa0">z</text></svg><svg style="position:absolute;left:1791px;top:127px;" width="16" height="16" viewBox="0 0 16 16"><circle cx="8" cy="8" r="5.5" fill="#5fb3ea" stroke="#2a86d2"/><circle cx="8" cy="8" r="2.5" fill="#d8efff"/><path d="M1 1 L15 15" stroke="#0c2a86" stroke-width="1.4"/></svg><svg style="position:absolute;left:1815px;top:127px;" width="16" height="16" viewBox="0 0 16 16"><circle cx="6" cy="9.5" r="3.5" fill="#9a9a9a" stroke="#777"/><text x="9" y="7" font-family="Liberation Sans" font-weight="bold" font-size="9" fill="#2a6fb4">S</text><path d="M0.5 4 L11.5 15" stroke="#0c2a86" stroke-width="1.3"/></svg><svg style="position:absolute;left:1840px;top:131px;" width="9" height="9" viewBox="0 0 9 9"><circle cx="4.5" cy="4.5" r="4" fill="#4cb052" stroke="#2f8a3a" stroke-width="0.8"/></svg><svg style="position:absolute;left:1861px;top:127px;" width="16" height="16" viewBox="0 0 16 16"><circle cx="6" cy="9.5" r="3.5" fill="#9a9a9a" stroke="#777"/><text x="9.5" y="7" font-family="Liberation Sans" font-weight="bold" font-size="9" fill="#2a6fb4">L</text><path d="M0.5 4 L11.5 15" stroke="#0c2a86" stroke-width="1.3"/></svg><svg style="position:absolute;left:1891px;top:128px;" width="11" height="7" viewBox="0 0 11 7"><path d="M0.5 0.5 H10.5 L5.5 5.5 Z" fill="#fff" stroke="#606060" stroke-linejoin="miter"/></svg><div style="position:absolute;left:1523px;top:146px;width:275px;height:23px;background:#f6f6f6;border:1px solid #dadada;box-sizing:border-box;"></div><svg style="position:absolute;left:1526px;top:150px;" width="16" height="16" viewBox="0 0 16 16"><rect x="2.5" y="2.5" width="11" height="11" fill="#d8d6b8" stroke="#8a8866"/><path d="M8 0.5 V15.5 M0.5 8 H15.5" stroke="#6b6a4e" stroke-width="1"/></svg><div class="t" style="left:1552px;top:147.94px;font-size:14.6px;color:#000;font-family:'Liberation Sans', sans-serif;letter-spacing:0.252px;">br.com.erudio.android.authentication</div><svg style="position:absolute;left:1508px;top:176px;" width="9" height="9" viewBox="0 0 9 9"><path d="M0 8 L8 8 L8 0 Z" fill="#454545"/></svg><svg style="position:absolute;left:1526px;top:172px;" width="16" height="16" viewBox="0 0 16 16"><circle cx="7" cy="7" r="6.5" fill="#2f8a4c"/><circle cx="7" cy="7" r="5.0" fill="#5cae6c"/><path d="M9.8 4.6 A3.4 3.4 0 1 0 9.8 9.4" fill="none" stroke="#fff" stroke-width="2"/></svg><div class="t" style="left:1552px;top:170.94px;font-size:14.6px;color:#000;font-family:'Liberation Sans', sans-serif;letter-spacing:0.113px;">Authentication</div><svg style="position:absolute;left:1533px;top:199px;" width="9" height="9" viewBox="0 0 9 9"><path d="M0 8 L8 8 L8 0 Z" fill="#454545"/></svg><svg style="position:absolute;left:1554px;top:200px;" width="9" height="9" viewBox="0 0 9 9"><circle cx="4.5" cy="4.5" r="4" fill="#62b86a" stroke="#2f8a3a" stroke-width="0.8"/></svg><div class="t" style="left:1566px;top:189.53px;font-size:10px;color:#c8102e;font-family:'Liberation Sans', sans-serif;">S</div><div class="t" style="left:1577px;top:193.94px;font-size:14.6px;color:#000;font-family:'Liberation Sans', sans-serif;letter-spacing:-0.007px;">authenticate(String, String, String)<span style="color:#95793f"> : WebResource</span></div><svg style="position:absolute;left:1560px;top:222px;" width="7" height="11" viewBox="0 0 7 11"><path d="M0.5 0.5 L6 5.5 L0.5 10.5 Z" fill="none" stroke="#a3a3a3"/></svg><svg style="position:absolute;left:1577px;top:218px;" width="16" height="16" viewBox="0 0 16 16"><circle cx="7" cy="7" r="6.5" fill="#2f8a4c"/><circle cx="7" cy="7" r="5.0" fill="#5cae6c"/><path d="M9.8 4.6 A3.4 3.4 0 1 0 9.8 9.4" fill="none" stroke="#fff" stroke-width="2"/></svg><svg style="position:absolute;left:1584px;top:225px;" width="9" height="8" viewBox="0 0 9 8"><path d="M4.5 0.5 L8.5 7.5 H0.5 Z" fill="#2c6cc4" stroke="#1d4f9a" stroke-width="0.6"/></svg><div class="t" style="left:1602px;top:216.94px;font-size:14.6px;color:#000;font-family:'Liberation Sans', sans-serif;letter-spacing:-0.057px;">new ClientFilter() {...}</div><div style="position:absolute;left:485px;top:733px;width:1428px;height:27px;background:linear-gradient(#e9f0fb 0px,#c6d8f1 3px,#bfd5f0 4px,#bfd5f0 15.5px,#c9d8f0 16px,#c9d8f0 25px);border:1px solid #a9bfe6;border-top-color:#b0c2e4;border-bottom:1px solid #b0b9cc;border-radius:5px 5px 0 0;box-sizing:border-box;"></div><div style="position:absolute;left:744px;top:733px;width:189px;height:27px;background:linear-gradient(#ffffff,#ffffff);border:1px solid #a9bfe6;border-bottom:none;border-radius:5px 5px 0 0;box-sizing:border-box;"></div><svg style="position:absolute;left:491px;top:739px;" width="14" height="16" viewBox="0 0 14 16"><path d="M0.5 0.5 H12 V3 L11 4 V12 L12 13 V14.5 H0.5 Z" fill="#f4f8fd" stroke="#7d7a6a"/><path d="M1 7.5 H11 M9.5 1 V14" stroke="#b8c0d0"/><circle cx="5.2" cy="4.2" r="2.4" fill="#e23a3a"/><path d="M2.5 12 L5.2 8.5 L8 12 Z" fill="#f0a828"/></svg><div class="t" style="left:510px;top:737.94px;font-size:14.6px;color:#000;font-family:'Liberation Sans', sans-serif;letter-spacing:-0.454px;">Markers</div><svg style="position:absolute;left:573px;top:740px;" width="14" height="13" viewBox="0 0 14 13"><rect x="0.5" y="0.5" width="13" height="12" fill="#f4f5f8" stroke="#6f7a94"/><rect x="0.5" y="0.5" width="13" height="2" fill="#6f7a94"/><path d="M1 5.5 H13 M1 8.5 H13" stroke="#b9c0d1"/></svg><div class="t" style="left:590px;top:737.94px;font-size:14.6px;color:#000;font-family:'Liberation Sans', sans-serif;">Properties</div><svg style="position:absolute;left:668px;top:740px;" width="14" height="14" viewBox="0 0 14 14"><path d="M2.5 0.5 V13.5 M6.5 0.5 V13.5 M10.5 0.5 V13.5" stroke="#2a3a8a" stroke-width="1.2"/><ellipse cx="2.5" cy="8.5" rx="2.2" ry="1.7" fill="#a8d050" stroke="#3c7a20" stroke-width="0.8"/><ellipse cx="6.5" cy="3.5" rx="2.2" ry="1.7" fill="#f0c040" stroke="#a07010" stroke-width="0.8"/><ellipse cx="10.5" cy="9.5" rx="2.2" ry="1.7" fill="#b8e8f0" stroke="#3a7aa0" stroke-width="0.8"/></svg><div class="t" style="left:687px;top:737.94px;font-size:14.6px;color:#000;font-family:'Liberation Sans', sans-serif;letter-spacing:-0.217px;">Servers</div><svg style="position:absolute;left:747px;top:738px;" width="17" height="17" viewBox="0 0 17 17"><path d="M0.5 1.5 L3.5 3 L7 1 L10.5 3 L13.5 1.5 V14 L10.5 15.5 L7 13.5 L3.5 15.5 L0.5 14 Z" fill="#b4e04a" stroke="#5a7a20" stroke-width="1"/><path d="M3.5 3 V15.5 M7 1 V13.5 M10.5 3 V15.5" stroke="#6a8a30" stroke-width="0.8"/><path d="M1 8 Q4 6 6 9 T11 8" stroke="#3a80c0" stroke-width="1.3" fill="none"/><rect x="10.5" y="6.5" width="6" height="3" fill="#fafaf0" stroke="#5a5a40"/><rect x="10.5" y="9.5" width="6" height="3" fill="#fafaf0" stroke="#5a5a40"/><rect x="10.5" y="12.5" width="6" height="3" fill="#fafaf0" stroke="#5a5a40"/><rect x="14" y="7.5" width="1.2" height="1" fill="#d02020"/></svg><div class="t" style="left:767px;top:737.94px;font-size:14.6px;color:#000;font-family:'Liberation Sans', sans-serif;letter-spacing:-0.030px;">Data Source Explorer</div><svg style="position:absolute;left:914px;top:742px;" width="11" height="11" viewBox="0 0 11 11"><path d="M0.5 0.5 H3.5 L5.5 2.5 L7.5 0.5 H10.5 V3.5 L8.5 5.5 L10.5 7.5 V10.5 H7.5 L5.5 8.5 L3.5 10.5 H0.5 V7.5 L2.5 5.5 L0.5 3.5 Z" fill="#fff" stroke="#4a4a4a" stroke-width="1" stroke-linejoin="miter"/></svg><svg style="position:absolute;left:938px;top:740px;" width="14" height="14" viewBox="0 0 14 14"><rect x="0.5" y="0.5" width="13" height="13" fill="#fff" stroke="#7a8aa6"/><path d="M2 2 L6 6 M2 2 V5 M2 2 H5" stroke="#1b2b5a"/><rect x="5" y="8" width="7" height="1.3" fill="#d43"/><rect x="5" y="10.5" width="7" height="1.3" fill="#4a4"/><rect x="2" y="8" width="2" height="1.3" fill="#c96"/></svg><div class="t" style="left:955px;top:737.94px;font-size:14.6px;color:#000;font-family:'Liberation Sans', sans-serif;letter-spacing:-0.117px;">Snippets</div><svg style="position:absolute;left:1677px;top:740px;" width="14" height="14" viewBox="0 0 14 14"><rect x="0.5" y="0.5" width="10" height="10" fill="#e8eef6" stroke="#b8c2d0"/><rect x="2.5" y="2.5" width="10" height="10" fill="#f4f8fd" stroke="#8a98ac"/><rect x="4" y="6.5" width="7" height="1.6" fill="#1d3e76"/></svg><svg style="position:absolute;left:1698px;top:738px;" width="17" height="17" viewBox="0 0 17 17"><path d="M0.5 4.5 L4.5 0.5 V3 H11.5 V6 H4.5 V8.5 Z" fill="#fcebb8" stroke="#c8901e" stroke-linejoin="miter"/><path d="M16.5 12.5 L12.5 8.5 V11 H5.5 V14 H12.5 V16.5 Z" fill="#fcebb8" stroke="#c8901e" stroke-linejoin="miter"/></svg><div style="position:absolute;left:1718px;top:735px;width:23px;height:22px;background:#a7c9f2;border:1px solid #7ba9e3;box-sizing:border-box;"></div><svg style="position:absolute;left:1722px;top:740px;" width="15" height="13" viewBox="0 0 15 13"><path d="M3 0.5 V11 M3 5.5 H8 M3 10.5 H8" stroke="#5a6a86"/><rect x="8.5" y="3.5" width="3" height="3" fill="none" stroke="#5a6a86"/><rect x="8.5" y="8.5" width="3" height="3" fill="none" stroke="#5a6a86"/><rect x="1.5" y="0.5" width="3" height="2" fill="#5a6a86"/></svg><svg style="position:absolute;left:1744px;top:738px;" width="17" height="15" viewBox="0 0 17 15"><path d="M0.5 7 Q1 5 3.5 5.5 L6 6 Q7.5 3.5 10 5 Q12.5 6.5 11 9 L13 9.5 Q14 11 12 11.5 L9 11 Q7 13 5 11.5 Q3 10 4.5 8 L2 8.5 Q0.5 8.5 0.5 7 Z" fill="#f6c21c" stroke="#8a5a10" stroke-width="1"/><path d="M6 8 Q8 6 9.5 8.5" fill="none" stroke="#8a5a10" stroke-width="0.9"/><path d="M12.5 0.5 V6 M9.8 3.2 H15.2" stroke="#f0a010" stroke-width="1.8"/><path d="M12.5 1.5 V5 M10.8 3.2 H14.2" stroke="#fff4c0" stroke-width="0.7"/></svg><svg style="position:absolute;left:1766px;top:738px;" width="17" height="17" viewBox="0 0 17 17"><path d="M1 6.5 V15.5 H16 V6.5 H13.5 V13 H3.5 V6.5 Z" fill="#c8d4e8" stroke="#5a72a8" stroke-width="1"/><rect x="3.5" y="11" width="10" height="2" fill="#7890c0"/><path d="M2 0.5 L9 7.5" stroke="#2a3aa0" stroke-width="1"/><path d="M6 8.5 H10 V4.5 Z" fill="#2a5aa0"/></svg><svg style="position:absolute;left:1789px;top:737px;" width="17" height="17" viewBox="0 0 17 17"><path d="M1 7.5 V16.5 H16 V7.5 H13.5 V14 H3.5 V7.5 Z" fill="#c8d4e8" stroke="#5a72a8" stroke-width="1"/><rect x="3.5" y="12" width="10" height="2" fill="#7890c0"/><path d="M6 11.5 L13 4.5" stroke="#2a3aa0" stroke-width="1"/><path d="M10 1 H14.5 V5.5 Z" fill="#2a5aa0"/></svg><svg style="position:absolute;left:1815px;top:739px;" width="15" height="16" viewBox="0 0 15 16"><path d="M0.5 1.5 Q0.5 0.5 1.5 0.5 H11.5 V12.5 H1.5 Q0.5 12.5 0.5 13.5 Z" fill="#a8c4e8" stroke="#4a6aa8"/><rect x="3" y="1" width="7" height="10" fill="#cfe0f5"/><rect x="5" y="5" width="4" height="1.4" fill="#3a5a98"/><rect x="5.5" y="9.5" width="9" height="6" fill="#fffef6" stroke="#6a6a50"/><path d="M7 12 H13 M7 14 H11" stroke="#8a8a7a" stroke-width="0.8"/></svg><svg style="position:absolute;left:1844px;top:739px;" width="11" height="7" viewBox="0 0 11 7"><path d="M0.5 0.5 H10.5 L5.5 5.5 Z" fill="#fff" stroke="#606060" stroke-linejoin="miter"/></svg><svg style="position:absolute;left:1864px;top:742px;" width="11" height="5" viewBox="0 0 11 5"><rect x="0.5" y="0.5" width="9" height="3" fill="#fff" stroke="#606060"/></svg><svg style="position:absolute;left:1888px;top:741px;" width="11" height="11" viewBox="0 0 11 11"><rect x="0.5" y="0.5" width="9" height="9" fill="#fff" stroke="#606060"/><rect x="1" y="2" width="8" height="1" fill="#606060"/></svg><div style="position:absolute;left:514px;top:762px;width:171px;height:22px;border:1px dotted #000;box-sizing:border-box;"></div><svg style="position:absolute;left:515px;top:768px;" width="16" height="12" viewBox="0 0 16 12"><path d="M0.5 10.5 V1.5 Q0.5 0.5 1.5 0.5 H4.5 L5.5 1.5 H11.5 V4.5" fill="#f7dc9c" stroke="#c28a3e"/><path d="M0.5 10.5 L3 4.5 H15 L12.5 10.5 Z" fill="#fbe3a6" stroke="#c28a3e"/></svg><div class="t" style="left:535px;top:763.94px;font-size:14.6px;color:#000;font-family:'Liberation Sans', sans-serif;letter-spacing:0.015px;">Database Connections</div><svg style="position:absolute;left:501px;top:794px;" width="7" height="7" viewBox="0 0 7 7"><path d="M0 6.5 L6.5 6.5 L6.5 0 Z" fill="#454545"/></svg><svg style="position:absolute;left:515px;top:791px;" width="16" height="12" viewBox="0 0 16 12"><path d="M0.5 10.5 V1.5 Q0.5 0.5 1.5 0.5 H4.5 L5.5 1.5 H11.5 V4.5" fill="#f7dc9c" stroke="#c28a3e"/><path d="M0.5 10.5 L3 4.5 H15 L12.5 10.5 Z" fill="#fbe3a6" stroke="#c28a3e"/></svg><div class="t" style="left:535px;top:786.94px;font-size:14.6px;color:#000;font-family:'Liberation Sans', sans-serif;letter-spacing:-0.023px;">ODA Data Sources</div><svg style="position:absolute;left:534px;top:814px;" width="16" height="12" viewBox="0 0 16 12"><path d="M0.5 10.5 V1.5 Q0.5 0.5 1.5 0.5 H4.5 L5.5 1.5 H11.5 V4.5" fill="#f7dc9c" stroke="#c28a3e"/><path d="M0.5 10.5 L3 4.5 H15 L12.5 10.5 Z" fill="#fbe3a6" stroke="#c28a3e"/></svg><div class="t" style="left:554px;top:809.94px;font-size:14.6px;color:#000;font-family:'Liberation Sans', sans-serif;letter-spacing:-0.072px;">Flat File Data Source</div><svg style="position:absolute;left:534px;top:837px;" width="16" height="12" viewBox="0 0 16 12"><path d="M0.5 10.5 V1.5 Q0.5 0.5 1.5 0.5 H4.5 L5.5 1.5 H11.5 V4.5" fill="#f7dc9c" stroke="#c28a3e"/><path d="M0.5 10.5 L3 4.5 H15 L12.5 10.5 Z" fill="#fbe3a6" stroke="#c28a3e"/></svg><div class="t" style="left:554px;top:832.94px;font-size:14.6px;color:#000;font-family:'Liberation Sans', sans-serif;letter-spacing:-0.113px;">Web Services Data Source</div><svg style="position:absolute;left:534px;top:860px;" width="16" height="12" viewBox="0 0 16 12"><path d="M0.5 10.5 V1.5 Q0.5 0.5 1.5 0.5 H4.5 L5.5 1.5 H11.5 V4.5" fill="#f7dc9c" stroke="#c28a3e"/><path d="M0.5 10.5 L3 4.5 H15 L12.5 10.5 Z" fill="#fbe3a6" stroke="#c28a3e"/></svg><div class="t" style="left:554px;top:855.94px;font-size:14.6px;color:#000;font-family:'Liberation Sans', sans-serif;letter-spacing:-0.121px;">XML Data Source</div><svg style="position:absolute;left:0px;top:65px;" width="2" height="16" viewBox="0 0 2 16"><rect x="0" y="0" width="2" height="2" rx="0.5" fill="#8d826a"/><rect x="0" y="4.5" width="2" height="2" rx="0.5" fill="#8d826a"/><rect x="0" y="9" width="2" height="2" rx="0.5" fill="#8d826a"/><rect x="0" y="13.5" width="2" height="2" rx="0.5" fill="#8d826a"/></svg><svg style="position:absolute;left:8px;top:65px;" width="15" height="15" viewBox="0 0 15 15"><rect x="0.5" y="3" width="13" height="11" fill="#eaf4fb" stroke="#a88b3c"/><rect x="1" y="3.5" width="9" height="2" fill="#3a78c0"/><path d="M13 12 Q10 14.5 6 14" stroke="#f3c33e" fill="none"/><path d="M11.5 0 V6 M8.5 3 H14.5" stroke="#c7942a" stroke-width="1.8"/><path d="M11.5 1 V5 M9.5 3 H13.5" stroke="#fff4c0" stroke-width="0.8"/></svg><svg style="position:absolute;left:31px;top:70px;" width="10" height="5" viewBox="0 0 10 5"><path d="M0 0 H10 L5 5 Z" fill="#000"/></svg><svg style="position:absolute;left:49px;top:65px;" width="15" height="15" viewBox="0 0 15 15"><rect x="0.5" y="0.5" width="14" height="14" fill="#d9d9d9" stroke="#bcbcbc"/><rect x="3" y="1" width="9" height="6" fill="#efefef"/><rect x="4" y="10" width="7" height="5" fill="#efefef" stroke="#bcbcbc" stroke-width="0.8"/></svg><svg style="position:absolute;left:72px;top:65px;" width="16" height="15" viewBox="0 0 16 15"><rect x="0.5" y="0.5" width="9" height="9" fill="#e6e6e6" stroke="#bcbcbc"/><rect x="2.5" y="2.5" width="9" height="9" fill="#e6e6e6" stroke="#bcbcbc"/><rect x="4.5" y="4.5" width="10" height="10" fill="#d9d9d9" stroke="#bcbcbc"/><rect x="6.5" y="5" width="6" height="3" fill="#efefef"/><rect x="7" y="11" width="5" height="4" fill="#efefef"/></svg><svg style="position:absolute;left:95px;top:65px;" width="15" height="15" viewBox="0 0 15 15"><path d="M3.5 0.5 H9 L11.5 3 V7.5 H3.5 Z" fill="#f4f4f4" stroke="#bcbcbc"/><path d="M5 3.5 H9 M5 5.5 H9" stroke="#bcbcbc"/><rect x="0.5" y="6.5" width="14" height="6" rx="1" fill="#d9d9d9" stroke="#bcbcbc"/><rect x="1" y="12" width="13" height="2.5" fill="#e6e6e6" stroke="#bcbcbc" stroke-width="0.8"/></svg><svg style="position:absolute;left:115px;top:65px;" width="2" height="16" viewBox="0 0 2 16"><rect x="0" y="0" width="2" height="2" rx="0.5" fill="#8d826a"/><rect x="0" y="4.5" width="2" height="2" rx="0.5" fill="#8d826a"/><rect x="0" y="9" width="2" height="2" rx="0.5" fill="#8d826a"/><rect x="0" y="13.5" width="2" height="2" rx="0.5" fill="#8d826a"/></svg><svg style="position:absolute;left:123px;top:65px;" width="16" height="15" viewBox="0 0 16 15"><rect x="0.5" y="3" width="6" height="3" fill="#e2e2e2"/><rect x="2.5" y="3" width="2" height="8" fill="#e2e2e2"/><circle cx="10.5" cy="5.5" r="4.5" fill="#9aa59c" stroke="#b8c0b8"/><path d="M12.5 3.6 A2.6 2.6 0 1 0 12.5 7.4" fill="none" stroke="#fff" stroke-width="1.6"/><path d="M5 8 L10 12 L5 15 Z" fill="#6a6a6a"/></svg><svg style="position:absolute;left:145px;top:65px;" width="16" height="15" viewBox="0 0 16 15"><path d="M0 14 H9" stroke="#a9a9a9"/><path d="M2.5 14 L10 4.5 L14 7 L7.5 14 Z" fill="#e6e2cc" stroke="#cfcbb8" stroke-width="0.8"/><path d="M10 4.5 L13.5 0.5 L15.5 1.5 L14 7 Z" fill="#d0d0cc"/></svg><svg style="position:absolute;left:170px;top:66px;" width="14" height="14" viewBox="0 0 14 14"><circle cx="5" cy="3.5" r="3" fill="#e8e8e8" stroke="#d0d0d0"/><rect x="1" y="3.5" width="8" height="3" fill="#efefef" stroke="#b0b0b0" stroke-width="0.8"/><circle cx="4.5" cy="10" r="3.5" fill="#8f8f8f"/><circle cx="11" cy="5.5" r="2.6" fill="#8f8f8f"/></svg><svg style="position:absolute;left:192px;top:65px;" width="15" height="15" viewBox="0 0 15 15"><rect x="0.5" y="0.5" width="14" height="14" fill="#f7f7f7" stroke="#bcbcbc"/><path d="M4 2.5 H11 M4 12.5 H11" stroke="#a8a8a8"/><rect x="4.5" y="4.5" width="6" height="6" fill="none" stroke="#909090"/><path d="M5.5 6.5 H9.5 M5.5 8.5 H9.5" stroke="#b0b0b0"/><path d="M2 2.5 V12.5 M13 2.5 V12.5" stroke="#a8a8a8" stroke-dasharray="1 1.5"/></svg><svg style="position:absolute;left:215px;top:65px;" width="15" height="15" viewBox="0 0 15 15"><rect x="0.5" y="0.5" width="14" height="14" fill="#f7f7f7" stroke="#bcbcbc"/><path d="M6 3.5 H11 M7.5 3.5 V13 M10 3.5 V13" stroke="#9a9a9a" stroke-width="1.4"/><circle cx="5.5" cy="5.5" r="2" fill="#9a9a9a"/></svg><svg style="position:absolute;left:236px;top:65px;" width="2" height="16" viewBox="0 0 2 16"><rect x="0" y="0" width="2" height="2" rx="0.5" fill="#8d826a"/><rect x="0" y="4.5" width="2" height="2" rx="0.5" fill="#8d826a"/><rect x="0" y="9" width="2" height="2" rx="0.5" fill="#8d826a"/><rect x="0" y="13.5" width="2" height="2" rx="0.5" fill="#8d826a"/></svg><svg style="position:absolute;left:244px;top:66px;" width="14" height="13" viewBox="0 0 14 13"><circle cx="7" cy="7" r="4.5" fill="#6fa5c2" stroke="#fff" stroke-width="1.2"/><path d="M0.5 0.5 L12 12" stroke="#0a1a6a" stroke-width="1.3"/></svg><svg style="position:absolute;left:263px;top:65px;" width="2" height="16" viewBox="0 0 2 16"><rect x="0" y="0" width="2" height="2" rx="0.5" fill="#8d826a"/><rect x="0" y="4.5" width="2" height="2" rx="0.5" fill="#8d826a"/><rect x="0" y="9" width="2" height="2" rx="0.5" fill="#8d826a"/><rect x="0" y="13.5" width="2" height="2" rx="0.5" fill="#8d826a"/></svg><svg style="position:absolute;left:271px;top:65px;" width="16" height="15" viewBox="0 0 16 15"><rect x="0" y="0.5" width="12" height="2" fill="#9a9a9a"/><rect x="0" y="4.5" width="12" height="2" fill="#9a9a9a"/><rect x="0" y="8.5" width="5" height="2" fill="#9a9a9a"/><path d="M7 8.5 H11 V6.5 L15 10 L11 13.5 V11.5 H8 Z" fill="#f2f2f2" stroke="#bcbcbc" stroke-width="0.8"/></svg><svg style="position:absolute;left:293px;top:65px;" width="17" height="14" viewBox="0 0 17 14"><path d="M0.5 3.5 H12 V1 L16 4.5 L12 8 V5.5 H8 V9.5 H10 L7 13 L4 9.5 H6 V5.5 H0.5 Z" fill="#fff3c4" stroke="#c9901c" stroke-linejoin="round"/><rect x="0" y="12" width="3" height="1.5" fill="#3a5a86"/><rect x="12" y="12" width="3" height="1.5" fill="#3a5a86"/></svg><div style="position:absolute;left:315px;top:63px;width:1px;height:19px;background:#4d5b78;"></div><div style="position:absolute;left:346px;top:63px;width:1px;height:19px;background:#4d5b78;"></div><div style="position:absolute;left:377px;top:63px;width:1px;height:19px;background:#4d5b78;"></div><div style="position:absolute;left:408px;top:63px;width:1px;height:19px;background:#4d5b78;"></div><div style="position:absolute;left:1073px;top:63px;width:1px;height:19px;background:#4d5b78;"></div><svg style="position:absolute;left:325px;top:67px;" width="15" height="12" viewBox="0 0 15 12"><path d="M4 11 V5 Q4 2.5 6.5 2.5 H10 V0.5 L13.5 3.5 L10 6.5 V4.5 H7 Q6 4.5 6 6 V11" fill="#f0efe8" stroke="#d6d3c8" stroke-width="0.8"/><rect x="0" y="9.5" width="3" height="1.5" fill="#d0cdc4"/><rect x="11" y="9.5" width="3" height="1.5" fill="#d0cdc4"/></svg><svg style="position:absolute;left:356px;top:67px;" width="15" height="12" viewBox="0 0 15 12"><path d="M1.5 7 Q2 1 7.5 1.5 Q12 2 12.5 6" fill="none" stroke="#e8e6de" stroke-width="2.2"/><path d="M9.5 5.5 H15 L12.3 9 Z" fill="#e8e6de"/><rect x="4" y="10" width="3" height="1.5" fill="#d0cdc4"/></svg><svg style="position:absolute;left:387px;top:67px;" width="15" height="12" viewBox="0 0 15 12"><path d="M0.5 2 H7 V7" fill="none" stroke="#e8e6de" stroke-width="2"/><path d="M4 6.5 H10 L7 10 Z" fill="#e8e6de"/><rect x="0" y="10" width="3" height="1.5" fill="#d0cdc4"/><rect x="11" y="10" width="3" height="1.5" fill="#d0cdc4"/></svg><svg style="position:absolute;left:418px;top:67px;" width="15" height="12" viewBox="0 0 15 12"><rect x="0.5" y="1.5" width="3" height="9" fill="#ececec" stroke="#d0d0d0" stroke-width="0.8"/><path d="M5 0.5 L14 6 L5 11.5 Z" fill="#aac2a8"/></svg><svg style="position:absolute;left:443px;top:67px;" width="12" height="12" viewBox="0 0 12 12"><rect x="0.5" y="0.5" width="4" height="11" fill="#ececec" stroke="#d0d0d0" stroke-width="0.8"/><rect x="6.5" y="0.5" width="4" height="11" fill="#ececec" stroke="#d0d0d0" stroke-width="0.8"/></svg><svg style="position:absolute;left:466px;top:67px;" width="12" height="12" viewBox="0 0 12 12"><rect x="0.5" y="0.5" width="11" height="11" fill="#d7b9c0" stroke="#cfcfcf"/></svg><svg style="position:absolute;left:487px;top:66px;" width="14" height="13" viewBox="0 0 14 13"><path d="M2.5 10 V4 L8 10 V4" fill="none" stroke="#c9b4b4" stroke-width="1"/><circle cx="2.5" cy="10.5" r="2" fill="#d8c4c4"/><circle cx="11.5" cy="2.5" r="2" fill="#d8c4c4"/></svg><svg style="position:absolute;left:508px;top:65px;" width="2" height="16" viewBox="0 0 2 16"><rect x="0" y="0" width="2" height="2" rx="0.5" fill="#8d826a"/><rect x="0" y="4.5" width="2" height="2" rx="0.5" fill="#8d826a"/><rect x="0" y="9" width="2" height="2" rx="0.5" fill="#8d826a"/><rect x="0" y="13.5" width="2" height="2" rx="0.5" fill="#8d826a"/></svg><svg style="position:absolute;left:515px;top:64px;" width="17" height="16" viewBox="0 0 17 16"><ellipse cx="9" cy="9.5" rx="4.2" ry="5" fill="#8cc68c" stroke="#2c5a2c"/><circle cx="6.5" cy="4" r="2.3" fill="#5a8a5a" stroke="#2c5a2c" stroke-width="0.8"/><path d="M1 5 L5 7 M0.5 10 L5 10 M1.5 15 L5.5 12.5 M17 6 L13 8 M16.5 11 L13 10.5 M15 15.5 L12 13" stroke="#1c3a1c" stroke-width="1"/><path d="M7 8 L11 12" stroke="#c8e8c8" stroke-width="1"/></svg><svg style="position:absolute;left:539px;top:70px;" width="10" height="5" viewBox="0 0 10 5"><path d="M0 0 H10 L5 5 Z" fill="#000"/></svg><svg style="position:absolute;left:558px;top:65px;" width="15" height="15" viewBox="0 0 15 15"><circle cx="7.5" cy="7.5" r="7" fill="#3ea33e" stroke="#1d6e1d"/><circle cx="7.5" cy="6.5" r="5" fill="#5fc25f"/><path d="M5.5 3.5 L11 7.5 L5.5 11.5 Z" fill="#fff"/></svg><svg style="position:absolute;left:581px;top:70px;" width="10" height="5" viewBox="0 0 10 5"><path d="M0 0 H10 L5 5 Z" fill="#000"/></svg><svg style="position:absolute;left:599px;top:64px;" width="17" height="17" viewBox="0 0 17 17"><circle cx="6.5" cy="6.5" r="6" fill="#3ea33e" stroke="#1d6e1d"/><path d="M4.5 3 L9.5 6.5 L4.5 10 Z" fill="#fff"/><rect x="8.5" y="10.5" width="8" height="5.5" rx="1" fill="#e03a3a" stroke="#a01010" stroke-width="0.8"/><rect x="11" y="9" width="3" height="2" fill="none" stroke="#a01010" stroke-width="0.8"/></svg><svg style="position:absolute;left:623px;top:70px;" width="10" height="5" viewBox="0 0 10 5"><path d="M0 0 H10 L5 5 Z" fill="#000"/></svg><svg style="position:absolute;left:638px;top:65px;" width="2" height="16" viewBox="0 0 2 16"><rect x="0" y="0" width="2" height="2" rx="0.5" fill="#8d826a"/><rect x="0" y="4.5" width="2" height="2" rx="0.5" fill="#8d826a"/><rect x="0" y="9" width="2" height="2" rx="0.5" fill="#8d826a"/><rect x="0" y="13.5" width="2" height="2" rx="0.5" fill="#8d826a"/></svg><svg style="position:absolute;left:647px;top:64px;" width="16" height="16" viewBox="0 0 16 16"><rect x="0.5" y="1.5" width="9" height="10" rx="1" fill="#eef2f8" stroke="#a4a4a4"/><circle cx="9.5" cy="10" r="5" fill="#3d86c6" stroke="#2a5a9a" stroke-width="0.8"/><path d="M7 8 Q9 6 11 9 Q10 12 8 12" fill="#7cc06a"/><path d="M12.5 0 V5.5 M9.8 2.7 H15.2" stroke="#d49a1a" stroke-width="1.6"/></svg><svg style="position:absolute;left:670px;top:70px;" width="10" height="5" viewBox="0 0 10 5"><path d="M0 0 H10 L5 5 Z" fill="#000"/></svg><svg style="position:absolute;left:689px;top:65px;" width="16" height="15" viewBox="0 0 16 15"><circle cx="6.5" cy="8.5" r="6" fill="#5a92c8" stroke="#3a6aa0"/><text x="3.2" y="12.5" font-family="Liberation Sans" font-weight="bold" font-size="10" fill="#fff">S</text><path d="M12.5 0 V5.5 M9.8 2.7 H15.2" stroke="#d49a1a" stroke-width="1.6"/></svg><svg style="position:absolute;left:712px;top:70px;" width="10" height="5" viewBox="0 0 10 5"><path d="M0 0 H10 L5 5 Z" fill="#000"/></svg><svg style="position:absolute;left:728px;top:65px;" width="2" height="16" viewBox="0 0 2 16"><rect x="0" y="0" width="2" height="2" rx="0.5" fill="#8d826a"/><rect x="0" y="4.5" width="2" height="2" rx="0.5" fill="#8d826a"/><rect x="0" y="9" width="2" height="2" rx="0.5" fill="#8d826a"/><rect x="0" y="13.5" width="2" height="2" rx="0.5" fill="#8d826a"/></svg><svg style="position:absolute;left:734px;top:65px;" width="17" height="15" viewBox="0 0 17 15"><path d="M0.5 4.5 H5 L6.5 6 H12.5 V14.5 H0.5 Z" fill="#f5d18a" stroke="#b67d2c"/><path d="M0.5 14.5 L3.5 8.5 H15.5 L12.5 14.5 Z" fill="#fbe3a8" stroke="#b67d2c"/><circle cx="7" cy="3.5" r="3" fill="#8a6ab0"/><circle cx="12.5" cy="5.5" r="3" fill="#3aa05a"/></svg><svg style="position:absolute;left:757px;top:66px;" width="16" height="14" viewBox="0 0 16 14"><path d="M0.5 3.5 H4 L5.5 5 H12.5 V13.5 H0.5 Z" fill="#f5d18a" stroke="#b67d2c"/><rect x="7.5" y="0.5" width="5" height="5" fill="#f4f4f4" stroke="#999"/><path d="M0.5 13.5 L3.5 7.5 H15.5 L12.5 13.5 Z" fill="#fbe3a8" stroke="#b67d2c"/></svg><svg style="position:absolute;left:781px;top:64px;" width="17" height="16" viewBox="0 0 17 16"><path d="M1 15 L3 10 L6 13 Z" fill="#fff6c8" stroke="#e8c060" stroke-width="0.8"/><path d="M3 10 L6 8 L8 10 L6 13 Z" fill="#8a8a8a"/><path d="M6 8 L13 1 Q15 0 16 2 L9 10 Z" fill="#f2b84a" stroke="#b0781a" stroke-width="0.8"/><circle cx="13" cy="3.5" r="0.8" fill="#2a5aa0"/></svg><svg style="position:absolute;left:805px;top:70px;" width="10" height="5" viewBox="0 0 10 5"><path d="M0 0 H10 L5 5 Z" fill="#000"/></svg><svg style="position:absolute;left:821px;top:65px;" width="2" height="16" viewBox="0 0 2 16"><rect x="0" y="0" width="2" height="2" rx="0.5" fill="#8d826a"/><rect x="0" y="4.5" width="2" height="2" rx="0.5" fill="#8d826a"/><rect x="0" y="9" width="2" height="2" rx="0.5" fill="#8d826a"/><rect x="0" y="13.5" width="2" height="2" rx="0.5" fill="#8d826a"/></svg><svg style="position:absolute;left:829px;top:65px;" width="14" height="14" viewBox="0 0 14 14"><circle cx="7" cy="7" r="6.5" fill="#2f7ec8" stroke="#1a4c86"/><path d="M3 4 Q6 3 7 6 Q5 9 7 12 Q4 11 3 8 Z" fill="#7ac060"/><path d="M9 3 Q12 5 11 9 Q9 8 9 5 Z" fill="#7ac060"/><circle cx="6" cy="7" r="1" fill="#c03a20"/></svg><svg style="position:absolute;left:849px;top:65px;" width="2" height="16" viewBox="0 0 2 16"><rect x="0" y="0" width="2" height="2" rx="0.5" fill="#8d826a"/><rect x="0" y="4.5" width="2" height="2" rx="0.5" fill="#8d826a"/><rect x="0" y="9" width="2" height="2" rx="0.5" fill="#8d826a"/><rect x="0" y="13.5" width="2" height="2" rx="0.5" fill="#8d826a"/></svg><svg style="position:absolute;left:856px;top:64px;" width="16" height="16" viewBox="0 0 16 16"><circle cx="10" cy="5.5" r="5" fill="#2f7ec8" stroke="#1a4c86" stroke-width="0.8"/><path d="M8 3 Q10 3 10 6 Q8 7 8 9 Z" fill="#7ac060"/><path d="M0.5 14 L5 6 L7 10 Z" fill="#fff" stroke="#1a3a9a"/><path d="M0 14.5 H8" stroke="#1a3a9a" stroke-width="1.2"/><path d="M9 8 L15 12 L9 16 Z" fill="#3aa03a"/></svg><svg style="position:absolute;left:877px;top:65px;" width="2" height="16" viewBox="0 0 2 16"><rect x="0" y="0" width="2" height="2" rx="0.5" fill="#8d826a"/><rect x="0" y="4.5" width="2" height="2" rx="0.5" fill="#8d826a"/><rect x="0" y="9" width="2" height="2" rx="0.5" fill="#8d826a"/><rect x="0" y="13.5" width="2" height="2" rx="0.5" fill="#8d826a"/></svg><svg style="position:absolute;left:885px;top:64px;" width="15" height="16" viewBox="0 0 15 16"><path d="M4.5 3.5 H11 L13.5 6 V15.5 H4.5 Z" fill="#f4f4f2" stroke="#c8c6bc"/><path d="M6.5 8.5 H11.5 M6.5 10.5 H11.5 M6.5 12.5 H11.5" stroke="#d0cec4"/><path d="M4 0 V8 M1.5 5.5 L4 8.5 L6.5 5.5" fill="none" stroke="#d8d6cc" stroke-width="2"/></svg><svg style="position:absolute;left:908px;top:70px;" width="10" height="5" viewBox="0 0 10 5"><path d="M0 0 H10 L5 5 Z" fill="#7a7a7a"/></svg><svg style="position:absolute;left:926px;top:64px;" width="15" height="16" viewBox="0 0 15 16"><path d="M4.5 0.5 H11 L13.5 3 V12.5 H4.5 Z" fill="#f4f4f2" stroke="#c8c6bc"/><path d="M6.5 4.5 H11.5 M6.5 6.5 H11.5 M6.5 8.5 H11.5" stroke="#d0cec4"/><path d="M4 16 V7 M1.5 9.5 L4 6.5 L6.5 9.5" fill="none" stroke="#d8d6cc" stroke-width="2"/></svg><svg style="position:absolute;left:950px;top:70px;" width="10" height="5" viewBox="0 0 10 5"><path d="M0 0 H10 L5 5 Z" fill="#7a7a7a"/></svg><svg style="position:absolute;left:967px;top:65px;" width="16" height="15" viewBox="0 0 16 15"><path d="M2 0 V5 M0 2.5 H4.5 M0.5 0.8 L3.8 4.2 M3.8 0.8 L0.5 4.2" stroke="#1a3a8a" stroke-width="0.8"/><path d="M1.5 8 L6 1.5 V5.5 H15 V10.5 H6 V13.5 Z" fill="#fde7a4" stroke="#d08a10" stroke-linejoin="round" stroke-width="1.2"/></svg><svg style="position:absolute;left:992px;top:66px;" width="16" height="15" viewBox="0 0 16 15"><path d="M0.5 7 L6 1.5 V4.5 H13.5 V9.5 H6 V12.5 Z" fill="#fde7a4" stroke="#d08a10" stroke-linejoin="round" stroke-width="1.2"/></svg><svg style="position:absolute;left:1015px;top:70px;" width="10" height="5" viewBox="0 0 10 5"><path d="M0 0 H10 L5 5 Z" fill="#000"/></svg><svg style="position:absolute;left:1034px;top:66px;" width="15" height="14" viewBox="0 0 15 14"><path d="M14.5 7 L9 1.5 V4.5 H1.5 V9.5 H9 V12.5 Z" fill="#f2f2ee" stroke="#d6d6ce" stroke-linejoin="round" stroke-width="1.2"/></svg><svg style="position:absolute;left:1057px;top:70px;" width="10" height="5" viewBox="0 0 10 5"><path d="M0 0 H10 L5 5 Z" fill="#7a7a7a"/></svg><svg style="position:absolute;left:1083px;top:66px;" width="14" height="14" viewBox="0 0 14 14"><rect x="0.5" y="3.5" width="11" height="9" fill="#f4f4f4" stroke="#9a9a9a"/><rect x="1" y="4" width="10" height="2" fill="#c8c8c8"/><path d="M6 9 L11 4" stroke="#555" stroke-width="1.2"/><circle cx="11.5" cy="2.5" r="2" fill="#9aaa8a"/></svg><svg style="position:absolute;left:1583px;top:60px;" width="2" height="26" viewBox="0 0 2 26"><rect x="0" y="0" width="2" height="2.5" fill="#8a8270"/><rect x="0" y="7.3" width="2" height="2.5" fill="#8a8270"/><rect x="0" y="14.6" width="2" height="2.5" fill="#8a8270"/><rect x="0" y="22" width="2" height="2.5" fill="#8a8270"/></svg><svg style="position:absolute;left:1601px;top:66px;" width="15" height="15" viewBox="0 0 15 15"><rect x="0.5" y="3.5" width="11" height="11" fill="#eaf4fb" stroke="#6e6040"/><rect x="1" y="4" width="10" height="2" fill="#3a78c0"/><path d="M5.5 6 V14 M1 9.5 H11" stroke="#6e6040"/><path d="M11.5 0 V6 M8.5 3 H14.5" stroke="#c7942a" stroke-width="1.8"/><path d="M11.5 1 V5 M9.5 3 H13.5" stroke="#fff4c0" stroke-width="0.8"/></svg><svg style="position:absolute;left:1632px;top:66px;" width="15" height="15" viewBox="0 0 15 15"><rect x="0.5" y="4.5" width="4" height="4" fill="#ffe9a0" stroke="#c8961a"/><rect x="7.5" y="10.5" width="4" height="4" fill="#ffe9a0" stroke="#c8961a"/><path d="M2.5 8.5 V12.5 H7.5" stroke="#c8961a" fill="none"/><ellipse cx="11" cy="3.5" rx="3.5" ry="3.2" fill="#b0653a" stroke="#7a3a18" stroke-width="0.6"/><path d="M8.5 2 L13 5.5 M9 4 L12 6.5" stroke="#e0a070" stroke-width="0.7"/></svg><svg style="position:absolute;left:1709px;top:65px;" width="17" height="17" viewBox="0 0 17 17"><circle cx="8.5" cy="8.5" r="7.6" fill="#404040" stroke="#7aa83c" stroke-width="1.4"/><path d="M1.2 10.5 L4.5 7 L7 9.5 L10.5 5.5 L15.8 10 A7.6 7.6 0 0 1 1.2 10.5 Z" fill="#6e9878"/><path d="M1.5 10 L4.5 6.8 L7 9.3 L10.5 5.3 L15.5 9.5" fill="none" stroke="#8fc540" stroke-width="1.2"/><path d="M1.8 12 L4.5 9 L7 11.5 L10.5 7.5 L15 11" fill="none" stroke="#f4f4f4" stroke-width="1" stroke-dasharray="1.2 0.8"/></svg><svg style="position:absolute;left:1783px;top:65px;" width="17" height="17" viewBox="0 0 17 17"><circle cx="8.5" cy="8.5" r="7.4" fill="#3d3d3d" stroke="#6aa82a" stroke-width="1.8"/><path d="M5 8.5 H9 M9 5 V12 M9 5 H11 M9 12 H11" stroke="#8ab8c8" stroke-width="1"/><rect x="3" y="6.5" width="4" height="4" fill="#d8f090"/><rect x="9.5" y="3" width="4" height="4" fill="#b0e050"/><rect x="9.5" y="10" width="4" height="4" fill="#90cc3a"/></svg><svg style="position:absolute;left:1561px;top:1011px;" width="2" height="17" viewBox="0 0 2 17"><rect x="0" y="0" width="2" height="3" fill="#77725f"/><rect x="0" y="5" width="2" height="2" fill="#77725f"/><rect x="0" y="9" width="2" height="2" fill="#77725f"/><rect x="0" y="14" width="2" height="2" fill="#77725f"/></svg>
</body></html>
